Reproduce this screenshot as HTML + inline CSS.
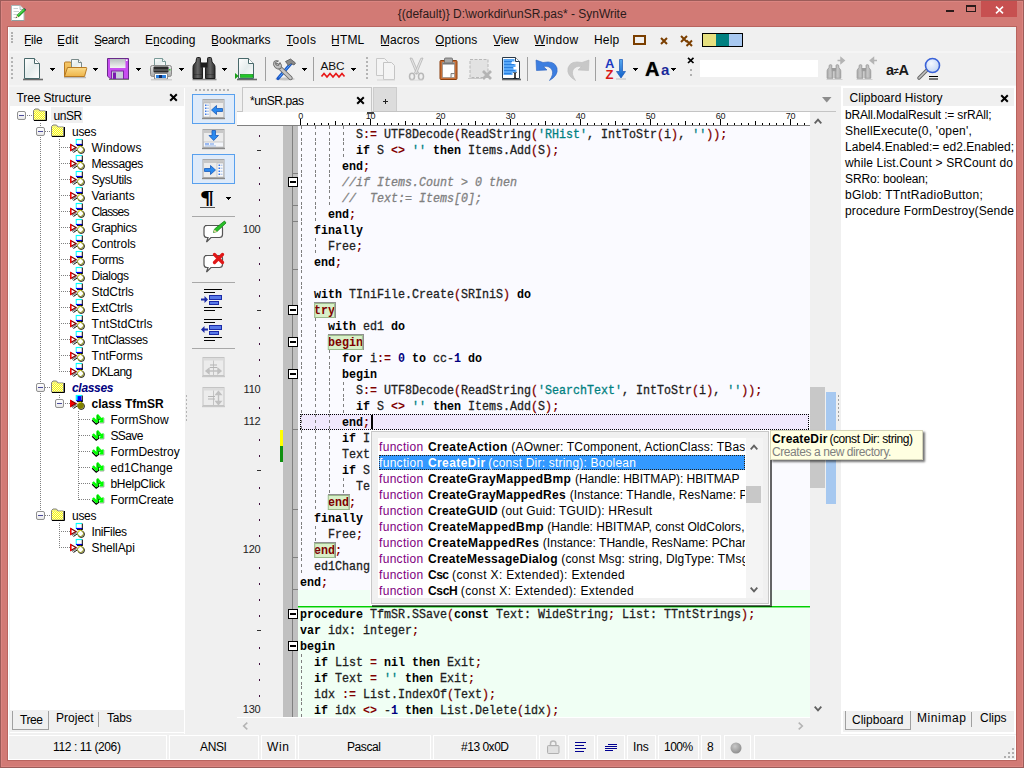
<!DOCTYPE html>
<html><head><meta charset="utf-8"><title>SynWrite</title>
<style>
html,body{margin:0;padding:0;}
body{width:1024px;height:768px;overflow:hidden;position:relative;background:#D27A75;font-family:"Liberation Sans",sans-serif;font-size:12px;}
.t{position:absolute;white-space:pre;line-height:16px;height:16px;}
.b{position:absolute;box-sizing:border-box;}
.m{font-family:"Liberation Mono",monospace;}
svg{position:absolute;overflow:visible;}
.code{position:absolute;white-space:pre;font-family:"Liberation Mono",monospace;font-size:13px;transform:scaleX(0.8974);transform-origin:0 0;line-height:16px;height:16px;color:#202020;-webkit-text-stroke:0.300px;}
.code b{color:#000;-webkit-text-stroke:0;}
.code .s{color:#800000;font-weight:bold;-webkit-text-stroke:0;}
.code .p{color:#800000;}
.code .q{color:#008080;}
.code .n{color:#000080;font-weight:bold;-webkit-text-stroke:0;}
.code .c{color:#808080;font-style:italic;}
.code .h{background:#D8F0C8;outline:1px solid #9AB88A;outline-offset:-1px;color:#800000;font-weight:bold;}
.code .h2{background:#D8F0C8;outline:1px solid #9AB88A;outline-offset:-1px;}

</style></head>
<body>
<div class="b " style="left:0px;top:0px;width:1024px;height:768px;background:#D27A75;border:1px solid #9C5C59;"></div>
<div class="b " style="left:1px;top:1px;width:1022px;height:766px;border:1px solid #DA8581;"></div>
<div class="b " style="left:7px;top:26px;width:1010px;height:735px;background:#B8645F;"></div>
<div class="b " style="left:8px;top:27px;width:1008px;height:733px;background:#F0F0F0;border-left:1px solid #fff;border-bottom:1px solid #fff;"></div>
<span class="t " style="left:397.8px;top:5.84px;font-size:12px;color:#2c1a1a;letter-spacing:-0.009px;">{(default)} D:\workdir\unSR.pas* - SynWrite</span>
<svg style="left:11px;top:5px" width="16" height="16" viewBox="0 0 16 16"><path d="M0.500 0.500h8.500l4 4v11h-12.500z" fill="#ffffff" stroke="#a8b8b8" stroke-width="1"/><path d="M1 15.500h12" stroke="#8a9898" stroke-width="0.800"/><path d="M9 0.500v4h4" fill="#f0f4f4" stroke="#a8b8b8" stroke-width="0.800"/><path d="M2.500 3.500h4.500M2.500 6.500h5.500M2.500 9.500h3.500M2.500 12.500h2" stroke="#c8d0d0" stroke-width="1"/><path d="M6.600 11.200l7.200-7" stroke="#187018" stroke-width="2.900"/><path d="M13.200 3.600l1.400 1.400" stroke="#203060" stroke-width="1.200"/><path d="M6.600 11.200l7-6.800" stroke="#28c828" stroke-width="1.700"/><path d="M7.200 10l5.800-5.600" stroke="#b0f0b0" stroke-width="0.500"/><path d="M4.600 13.100l1-2.900 2 2z" fill="#e8d8a8"/><path d="M4.500 13.200l0.600-1.500 1 1z" fill="#383838"/></svg>
<div class="b " style="left:946px;top:10px;width:8px;height:2px;background:#2a1a1a;"></div>
<div class="b " style="left:966px;top:5px;width:10px;height:7px;border:1px solid #2a1a1a;border-top:2px solid #2a1a1a;"></div>
<div class="b " style="left:981px;top:1px;width:36px;height:16px;background:#C75050;"></div>
<svg style="left:994.500px;top:5.500px" width="9" height="8" viewBox="0 0 9 8"><path d="M1 0.700l7 6.600M8 0.700l-7 6.600" stroke="#fff" stroke-width="1.600"/></svg>
<div class="b " style="left:9px;top:51px;width:1007px;height:2px;background:#F5F5F5;"></div>
<div class="b " style="left:9px;top:85px;width:1007px;height:2px;background:#F5F5F5;"></div>
<div class="b " style="left:11px;top:32px;width:2px;height:2px;background:#B0B0B0;"></div>
<div class="b " style="left:11px;top:35px;width:2px;height:2px;background:#B0B0B0;"></div>
<div class="b " style="left:11px;top:38px;width:2px;height:2px;background:#B0B0B0;"></div>
<div class="b " style="left:11px;top:41px;width:2px;height:2px;background:#B0B0B0;"></div>
<span class="t " style="left:24px;top:31.84px;font-size:12px;color:#000;letter-spacing:-0.209px;">File</span>
<div class="b " style="left:24.5px;top:45px;width:6px;height:1px;background:#000;"></div>
<span class="t " style="left:57px;top:31.84px;font-size:12px;color:#000;letter-spacing:0.206px;">Edit</span>
<div class="b " style="left:57.5px;top:45px;width:6px;height:1px;background:#000;"></div>
<span class="t " style="left:94px;top:31.84px;font-size:12px;color:#000;letter-spacing:-0.420px;">Search</span>
<div class="b " style="left:94.5px;top:45px;width:6px;height:1px;background:#000;"></div>
<span class="t " style="left:145px;top:31.84px;font-size:12px;color:#000;letter-spacing:0.058px;">Encoding</span>
<div class="b " style="left:153.504px;top:45px;width:5px;height:1px;background:#000;"></div>
<span class="t " style="left:211px;top:31.84px;font-size:12px;color:#000;letter-spacing:-0.057px;">Bookmarks</span>
<div class="b " style="left:211.5px;top:45px;width:6px;height:1px;background:#000;"></div>
<span class="t " style="left:286px;top:31.84px;font-size:12px;color:#000;letter-spacing:0.498px;">Tools</span>
<div class="b " style="left:286.5px;top:45px;width:6px;height:1px;background:#000;"></div>
<span class="t " style="left:331px;top:31.84px;font-size:12px;color:#000;letter-spacing:0.209px;">HTML</span>
<div class="b " style="left:331.5px;top:45px;width:7px;height:1px;background:#000;"></div>
<span class="t " style="left:380px;top:31.84px;font-size:12px;color:#000;letter-spacing:0.027px;">Macros</span>
<div class="b " style="left:380.5px;top:45px;width:8px;height:1px;background:#000;"></div>
<span class="t " style="left:435px;top:31.84px;font-size:12px;color:#000;letter-spacing:0.164px;">Options</span>
<div class="b " style="left:435.5px;top:45px;width:8px;height:1px;background:#000;"></div>
<span class="t " style="left:493px;top:31.84px;font-size:12px;color:#000;letter-spacing:-0.073px;">View</span>
<div class="b " style="left:493.5px;top:45px;width:6px;height:1px;background:#000;"></div>
<span class="t " style="left:534px;top:31.84px;font-size:12px;color:#000;letter-spacing:0.304px;">Window</span>
<div class="b " style="left:534.5px;top:45px;width:10px;height:1px;background:#000;"></div>
<span class="t " style="left:594px;top:31.84px;font-size:12px;color:#000;letter-spacing:0.205px;">Help</span>
<div class="b " style="left:633px;top:35px;width:13px;height:10px;border:2px solid #7B3F00;"></div>
<svg style="left:660px;top:37px" width="8" height="8" viewBox="0 0 8 8"><path d="M1 1l6 6M7 1l-6 6" stroke="#7B3F00" stroke-width="2"/></svg>
<svg style="left:680px;top:35px" width="13" height="12" viewBox="0 0 13 12"><path d="M1 1l6 6M7 1l-6 6" stroke="#7B3F00" stroke-width="2"/><path d="M6.5 5.5l5.5 5.5M12 5.5l-5.5 5.5" stroke="#7B3F00" stroke-width="2"/></svg>
<div class="b " style="left:702px;top:33px;width:41px;height:14px;background:#000;"></div>
<div class="b " style="left:703px;top:34px;width:13px;height:12px;background:#E6E080;"></div>
<div class="b " style="left:716px;top:34px;width:13px;height:12px;background:#008080;"></div>
<div class="b " style="left:729px;top:34px;width:13px;height:12px;background:#A8C8F0;"></div>
<svg width="0" height="0" style="left:0;top:0"><defs>
<linearGradient id="gdoc" x1="0" y1="0" x2="1" y2="1"><stop offset="0" stop-color="#ffffff"/><stop offset="0.5" stop-color="#e4ecec"/><stop offset="1" stop-color="#ffffff"/></linearGradient>
<linearGradient id="gfold" x1="0" y1="0" x2="0" y2="1"><stop offset="0" stop-color="#fbdc8c"/><stop offset="1" stop-color="#eeb448"/></linearGradient>
<linearGradient id="gfold2" x1="0" y1="0" x2="0" y2="1"><stop offset="0" stop-color="#f6c86a"/><stop offset="1" stop-color="#e8a93c"/></linearGradient>
<linearGradient id="gbino" x1="0" y1="0" x2="1" y2="0"><stop offset="0" stop-color="#2a2a2a"/><stop offset="0.5" stop-color="#666"/><stop offset="1" stop-color="#2a2a2a"/></linearGradient>
<linearGradient id="gbinog" x1="0" y1="0" x2="1" y2="0"><stop offset="0" stop-color="#a4a4a4"/><stop offset="0.5" stop-color="#c8c8c8"/><stop offset="1" stop-color="#a4a4a4"/></linearGradient>
<linearGradient id="gprn" x1="0" y1="0" x2="0" y2="1"><stop offset="0" stop-color="#e8e8e8"/><stop offset="1" stop-color="#a8a8a8"/></linearGradient>
<linearGradient id="gflop" x1="0" y1="0" x2="0" y2="1"><stop offset="0" stop-color="#b8c0c0"/><stop offset="1" stop-color="#f4f4f4"/></linearGradient>
<linearGradient id="gblue" x1="0" y1="0" x2="0" y2="1"><stop offset="0" stop-color="#58a8f0"/><stop offset="1" stop-color="#1060c8"/></linearGradient>
<radialGradient id="glens" cx="0.4" cy="0.35" r="0.7"><stop offset="0" stop-color="#f4f8ff"/><stop offset="1" stop-color="#c0d4f4"/></radialGradient>
</defs></svg>
<div class="b " style="left:11px;top:57px;width:2px;height:2px;background:#B4B4B4;"></div>
<div class="b " style="left:11px;top:61px;width:2px;height:2px;background:#B4B4B4;"></div>
<div class="b " style="left:11px;top:65px;width:2px;height:2px;background:#B4B4B4;"></div>
<div class="b " style="left:11px;top:69px;width:2px;height:2px;background:#B4B4B4;"></div>
<div class="b " style="left:11px;top:73px;width:2px;height:2px;background:#B4B4B4;"></div>
<div class="b " style="left:11px;top:77px;width:2px;height:2px;background:#B4B4B4;"></div>
<svg style="left:22px;top:57px" width="22" height="24" viewBox="0 0 22 24"><path d="M1 22.5h20" stroke="#6a6a6a" stroke-width="1.6"/><path d="M2.5 1.5h10l5 5v15h-15z" fill="url(#gdoc)" stroke="#48686a" stroke-width="1"/><path d="M12.5 1.5v5h5" fill="#fff" stroke="#48686a" stroke-width="1"/></svg>
<div class="b " style="left:50px;top:68px;width:5px;height:1px;background:#000;"></div>
<div class="b " style="left:51px;top:69px;width:3px;height:1px;background:#000;"></div>
<div class="b " style="left:52px;top:70px;width:1px;height:1px;background:#000;"></div>
<svg style="left:63px;top:58px" width="25" height="21" viewBox="0 0 25 21"><path d="M1 19.5h22" stroke="#b9b9b9" stroke-width="1.5"/><path d="M1.5 18.5v-13.5q0-1 1-1h5l1.5 2h4v12.5z" fill="url(#gfold2)" stroke="#b77a24" stroke-width="1"/><path d="M8.500 1.500h7l3 3v6h-10z" fill="url(#gdoc)" stroke="#7a8a8a" stroke-width="1"/><path d="M15.5 1.5v3h3" fill="#fff" stroke="#7a8a8a"/><path d="M4.5 9.500h18.500q1 0 0.700 1l-2.200 8h-20z" fill="url(#gfold)" stroke="#b77a24" stroke-width="1"/></svg>
<div class="b " style="left:93px;top:68px;width:5px;height:1px;background:#000;"></div>
<div class="b " style="left:94px;top:69px;width:3px;height:1px;background:#000;"></div>
<div class="b " style="left:95px;top:70px;width:1px;height:1px;background:#000;"></div>
<svg style="left:107px;top:58px" width="22" height="22" viewBox="0 0 22 22"><path d="M0.5 0.500h21v20.5h-18l-3-3z" fill="#c84ef0" stroke="#6a2a8a" stroke-width="1"/><rect x="3" y="1" width="15.500" height="9" fill="url(#gflop)"/><rect x="19" y="1.500" width="1.500" height="1.500" fill="#fff"/><rect x="4.500" y="13" width="12" height="8" fill="#c8ccd8" stroke="#7a2aa0" stroke-width="1"/><rect x="6" y="14.500" width="3" height="6.500" fill="#7a18b0"/><path d="M2 21.500h20" stroke="#7a7a7a" stroke-width="1"/></svg>
<div class="b " style="left:136px;top:68px;width:5px;height:1px;background:#000;"></div>
<div class="b " style="left:137px;top:69px;width:3px;height:1px;background:#000;"></div>
<div class="b " style="left:138px;top:70px;width:1px;height:1px;background:#000;"></div>
<svg style="left:149px;top:57px" width="25" height="24" viewBox="0 0 25 24"><path d="M5.500 9v-7.500h8l3 3v4.500z" fill="url(#gdoc)" stroke="#7a9a98"/><path d="M13.500 1.500v3h3" fill="#fff" stroke="#7a9a98"/><rect x="1.500" y="8.500" width="21" height="11" rx="2" fill="url(#gprn)" stroke="#8a8a8a"/><rect x="4.500" y="9.500" width="15" height="6" rx="1" fill="#2a2a2a"/><rect x="5" y="12" width="14" height="2" fill="#555"/><rect x="20" y="12" width="1.500" height="1.500" fill="#30d030"/><path d="M5.500 16.500h13v5.500h-13z" fill="#fff" stroke="#8a8a8a"/><path d="M7 18h10v3h-10z" fill="#2a80e0"/><path d="M10 18h3v3h-3z" fill="#102a60"/><path d="M2 22.800h21" stroke="#c8c8c8" stroke-width="1.200"/></svg>
<div class="b " style="left:179px;top:68px;width:5px;height:1px;background:#000;"></div>
<div class="b " style="left:180px;top:69px;width:3px;height:1px;background:#000;"></div>
<div class="b " style="left:181px;top:70px;width:1px;height:1px;background:#000;"></div>
<svg style="left:192px;top:57px" width="25" height="24" viewBox="0 0 25 24"><path d="M0.500 22.500h24" stroke="#8a8a8a" stroke-width="1.600"/><path d="M4.500 1.500q0-1 1-1h2q1 0 1 1v3.500l1.500 3q0.500 1 0.500 2.500v11h-9.500v-11q0-1.500 0.500-2.500l2.500-3z" fill="url(#gbino)" stroke="#1c1c1c" stroke-width="1"/><path d="M19.500 1.500q0-1 -1-1h-2q-1 0 -1 1v3.500l-1.500 3q-0.500 1 -0.500 2.500v11h9.500v-11q0-1.500 -0.500-2.500l-2.500-3z" fill="url(#gbino)" stroke="#1c1c1c" stroke-width="1"/><rect x="8.500" y="5.500" width="7" height="5" fill="#1c1c1c"/><path d="M2 17.500h8M14.500 17.500h8" stroke="#1c1c1c" stroke-width="0.600" opacity="0.600"/></svg>
<div class="b " style="left:222px;top:68px;width:5px;height:1px;background:#000;"></div>
<div class="b " style="left:223px;top:69px;width:3px;height:1px;background:#000;"></div>
<div class="b " style="left:224px;top:70px;width:1px;height:1px;background:#000;"></div>
<svg style="left:236px;top:57px" width="22" height="24" viewBox="0 0 22 24"><path d="M1 22.5h20" stroke="#6a6a6a" stroke-width="1.6"/><path d="M2.5 1.5h10l5 5v15h-15z" fill="url(#gdoc)" stroke="#48686a" stroke-width="1"/><path d="M12.5 1.5v5h5" fill="#fff" stroke="#48686a" stroke-width="1"/></svg>
<svg style="left:234px;top:72px" width="22" height="8" viewBox="0 0 22 8"><path d="M1 1l3.800 3-3.800 3z" fill="#18a018"/><rect x="6.500" y="2.500" width="12.500" height="2.800" fill="#20c828" stroke="#109018" stroke-width="0.700"/></svg>
<div class="b " style="left:265px;top:57px;width:1px;height:24px;background:#A0A0A0;"></div>
<svg style="left:272px;top:58px" width="25" height="23" viewBox="0 0 25 23"><ellipse cx="13" cy="21" rx="10" ry="1.500" fill="#c4c4c4"/><path d="M6 20.500l13-15" stroke="#1a58c8" stroke-width="3.200" stroke-linecap="round"/><path d="M7 19.500l12-14" stroke="#5aa8f8" stroke-width="1"/><path d="M13.500 3.500l5-2.500 5 4-1.500 2-3-1.500-2.500 2z" fill="#8a8a8a" stroke="#555" stroke-width="0.800"/><path d="M5 7l13.500 13" stroke="#666" stroke-width="4.400" stroke-linecap="round"/><path d="M5 7l13.500 13" stroke="#c4c4c4" stroke-width="2.600" stroke-linecap="round"/><path d="M2 3.500q-1.500 3.500 1 6t6 1q1.500-3.500-1-6l-1.500 3-2.500-0.500-0.500-2.500 3-1.500q-2.500-1-4.500 0.500z" fill="#c0c0c0" stroke="#666" stroke-width="0.900"/></svg>
<div class="b " style="left:302px;top:68px;width:5px;height:1px;background:#000;"></div>
<div class="b " style="left:303px;top:69px;width:3px;height:1px;background:#000;"></div>
<div class="b " style="left:304px;top:70px;width:1px;height:1px;background:#000;"></div>
<div class="b " style="left:313px;top:57px;width:1px;height:24px;background:#A0A0A0;"></div>
<span class="t" style="left:320.500px;top:58.400px;font-size:11.800px;color:#101010;letter-spacing:-0.1px">ABC</span>
<svg style="left:321px;top:72px" width="25" height="7" viewBox="0 0 25 7"><path d="M0.500 4.500l2.500-3 3 3.500 3-3.500 3 3.500 3-3.500 3 3.500 3-3.500 2.500 3" fill="none" stroke="#e81818" stroke-width="1.700"/></svg>
<div class="b " style="left:351px;top:68px;width:5px;height:1px;background:#000;"></div>
<div class="b " style="left:352px;top:69px;width:3px;height:1px;background:#000;"></div>
<div class="b " style="left:353px;top:70px;width:1px;height:1px;background:#000;"></div>
<div class="b " style="left:366px;top:57px;width:2px;height:2px;background:#B4B4B4;"></div>
<div class="b " style="left:366px;top:61px;width:2px;height:2px;background:#B4B4B4;"></div>
<div class="b " style="left:366px;top:65px;width:2px;height:2px;background:#B4B4B4;"></div>
<div class="b " style="left:366px;top:69px;width:2px;height:2px;background:#B4B4B4;"></div>
<div class="b " style="left:366px;top:73px;width:2px;height:2px;background:#B4B4B4;"></div>
<div class="b " style="left:366px;top:77px;width:2px;height:2px;background:#B4B4B4;"></div>
<svg style="left:375px;top:57px" width="22" height="24" viewBox="0 0 22 24"><path d="M1.500 1.500h8l3 3v14h-11z" fill="#f4f4f4" stroke="#c8c8c8"/><path d="M8.500 5.500h8l3 3v14h-11z" fill="#f4f4f4" stroke="#c4c4c4"/><path d="M2 23h18" stroke="#d4d4d4"/></svg>
<svg style="left:408px;top:57px" width="17" height="24" viewBox="0 0 17 24"><path d="M2 1l2.200 0.300 6.300 14.700-1.800 1.200z" fill="#e4e4e4" stroke="#b4b4b4" stroke-width="0.800"/><path d="M15 1l-2.200 0.300-6.300 14.700 1.800 1.200z" fill="#e4e4e4" stroke="#b4b4b4" stroke-width="0.800"/><ellipse cx="4" cy="19.500" rx="2.500" ry="3.200" fill="none" stroke="#b8b8b8" stroke-width="1.500"/><ellipse cx="13" cy="19.500" rx="2.500" ry="3.200" fill="none" stroke="#b8b8b8" stroke-width="1.500"/><path d="M2 23.200h13" stroke="#dcdcdc"/></svg>
<svg style="left:439px;top:57px" width="19" height="24" viewBox="0 0 19 24"><rect x="1" y="3.500" width="17" height="19" rx="1" fill="#c87038" stroke="#8a4010"/><rect x="3.500" y="5.500" width="12" height="15" fill="#fff" stroke="#888" stroke-width="0.600"/><rect x="5.500" y="1" width="8" height="5" rx="1" fill="#a8a8a8" stroke="#666" stroke-width="0.800"/><rect x="3.500" y="6" width="12" height="1.500" fill="#777"/><path d="M12 20.500v-4h3.500" fill="#e8e8e8" stroke="#666" stroke-width="0.800"/></svg>
<svg style="left:468px;top:58px" width="25" height="22" viewBox="0 0 25 22"><rect x="2" y="1.500" width="18" height="18" fill="#e2e2e2" stroke="#b8b8b8" stroke-dasharray="3 1.500"/><path d="M15 13l8 8M23 13l-8 8" stroke="#b4b4b4" stroke-width="2.800"/><path d="M0 20.500h14" stroke="#c8c8c8"/></svg>
<svg style="left:501px;top:57px" width="21" height="24" viewBox="0 0 21 24"><path d="M1 22.500h19" stroke="#6a6a6a" stroke-width="1.600"/><path d="M1.500 0.500h13l4 4v17h-17z" fill="#fff" stroke="#2a3a4a"/><path d="M14.500 0.500v4h4" fill="#fff" stroke="#2a3a4a"/><path d="M2.500 2h11v2.500h-3v2.500h4v3h-2v2.500h3v3h-4v2.500h-9z" fill="#58a8f8"/><path d="M3 4.500h8M3 7.500h10M3 10.500h9M3 13.500h11M3 16.500h7" stroke="#2a80e0" stroke-width="1"/><path d="M12.500 15.500q1.500 0 1.500 1.500v3q0 1.500 1.500 1.500M15.500 15.500q-1.500 0-1.500 1.500v3q0 1.500-1.500 1.500" stroke="#000" stroke-width="0.900" fill="none"/></svg>
<div class="b " style="left:527px;top:57px;width:1px;height:24px;background:#A0A0A0;"></div>
<svg style="left:535px;top:58px" width="24" height="23" viewBox="0 0 24 23"><path d="M1 2l0.500 10.500 10.500-0.500-3.500-3.500q6-1 8.500 3.500 2 4-2.500 10.500 9-5 7.500-12.500-2.500-8-14-5.500z" fill="#3c7ee0" stroke="#2a62c0" stroke-width="0.600"/></svg>
<svg style="left:566px;top:58px" width="24" height="23" viewBox="0 0 24 23"><path d="M23 2l-0.500 10.500-10.500-0.500 3.500-3.500q-6-1-8.500 3.500-2 4 2.500 10.500-9-5-7.500-12.500 2.500-8 14-5.500z" fill="#c8c8c8" stroke="#bcbcbc" stroke-width="0.600"/></svg>
<div class="b " style="left:595px;top:57px;width:1px;height:24px;background:#A0A0A0;"></div>
<span class="t" style="left:605px;top:55.500px;font-size:13px;font-weight:bold;color:#1c38c0">A</span>
<span class="t" style="left:605.500px;top:67px;font-size:13px;font-weight:bold;color:#d81818">Z</span>
<svg style="left:616px;top:59px" width="10" height="21" viewBox="0 0 10 21"><path d="M3.500 0.500h3v12h3l-4.500 6.500-4.500-6.500h3z" fill="url(#gblue)" stroke="#1858b8" stroke-width="0.700"/><path d="M0 20h10" stroke="#c0c0c0"/></svg>
<div class="b " style="left:633px;top:68px;width:5px;height:1px;background:#000;"></div>
<div class="b " style="left:634px;top:69px;width:3px;height:1px;background:#000;"></div>
<div class="b " style="left:635px;top:70px;width:1px;height:1px;background:#000;"></div>
<span class="t" style="left:645px;top:57px;font-size:20px;font-weight:bold;color:#000;line-height:24px;height:24px;text-shadow:0 0 1px #444">A</span>
<span class="t" style="left:661px;top:60px;font-size:15px;color:#1a2a9a;line-height:20px;height:20px;font-weight:bold">a</span>
<div class="b " style="left:671px;top:68px;width:5px;height:1px;background:#000;"></div>
<div class="b " style="left:672px;top:69px;width:3px;height:1px;background:#000;"></div>
<div class="b " style="left:673px;top:70px;width:1px;height:1px;background:#000;"></div>
<svg style="left:687px;top:57px" width="8" height="7" viewBox="0 0 8 7"><path d="M1 0.800l5.500 5.200M6.500 0.800l-5.500 5.200" stroke="#000" stroke-width="1.700"/></svg>
<div class="b " style="left:690px;top:69px;width:2px;height:2px;background:#B0B0B0;"></div>
<div class="b " style="left:690px;top:74px;width:2px;height:2px;background:#B0B0B0;"></div>
<div class="b " style="left:700px;top:60px;width:118px;height:17px;background:#fff;"></div>
<svg style="left:826px;top:57px" width="22" height="24" viewBox="0 0 22 24"><path d="M11.500 3.500h5.500M15 0.800l3.200 2.700-3.200 2.700z" fill="#b4b4b4" stroke="#b4b4b4" stroke-width="1.500"/><g transform="translate(0.500,7.500) scale(0.620,0.640)"><path d="M4.500 1.500q0-1 1-1h2q1 0 1 1v3.500l1.500 3q0.500 1 0.500 2.500v11h-9.500v-11q0-1.500 0.500-2.500l2.500-3z" fill="url(#gbinog)" stroke="#9c9c9c" stroke-width="1.400"/><path d="M19.500 1.500q0-1 -1-1h-2q-1 0 -1 1v3.500l-1.500 3q-0.500 1 -0.500 2.500v11h9.500v-11q0-1.500 -0.500-2.500l-2.500-3z" fill="url(#gbinog)" stroke="#9c9c9c" stroke-width="1.400"/><rect x="8.500" y="5.500" width="7" height="5" fill="#9c9c9c"/></g><path d="M0.500 22.500h16" stroke="#d0d0d0"/></svg>
<svg style="left:856px;top:57px" width="22" height="24" viewBox="0 0 22 24"><path d="M21 3.500h-5.500M17.500 0.800l-3.200 2.700 3.200 2.700z" fill="#b4b4b4" stroke="#b4b4b4" stroke-width="1.500"/><g transform="translate(0.500,7.500) scale(0.620,0.640)"><path d="M4.500 1.500q0-1 1-1h2q1 0 1 1v3.500l1.500 3q0.500 1 0.500 2.500v11h-9.500v-11q0-1.500 0.500-2.500l2.500-3z" fill="url(#gbinog)" stroke="#9c9c9c" stroke-width="1.400"/><path d="M19.500 1.500q0-1 -1-1h-2q-1 0 -1 1v3.500l-1.500 3q-0.500 1 -0.500 2.500v11h9.500v-11q0-1.500 -0.500-2.500l-2.500-3z" fill="url(#gbinog)" stroke="#9c9c9c" stroke-width="1.400"/><rect x="8.500" y="5.500" width="7" height="5" fill="#9c9c9c"/></g><path d="M0.500 22.500h16" stroke="#d0d0d0"/></svg>
<span class="t" style="left:886px;top:59.500px;font-size:14.500px;font-weight:bold;color:#1a1a1a;line-height:20px;height:20px;letter-spacing:-0.3px">a<span style="font-size:9px;vertical-align:1px">≠</span>A</span>
<svg style="left:917px;top:57px" width="25" height="24" viewBox="0 0 25 24"><path d="M2 21l7.500-7.500" stroke="#666" stroke-width="3.600" stroke-linecap="round"/><path d="M2 21l7.500-7.500" stroke="#c4c4c4" stroke-width="1.600" stroke-linecap="round"/><circle cx="15.500" cy="8.500" r="7" fill="url(#glens)" stroke="#3a62d8" stroke-width="1.600"/><path d="M12 19.500h9M12 22h9" stroke="#000" stroke-width="1"/></svg>
<div class="b " style="left:10px;top:88px;width:174px;height:18px;background:#F0F0F0;"></div>
<div class="b " style="left:10px;top:106px;width:174px;height:604px;background:#fff;"></div>
<span class="t " style="left:16.5px;top:89.84px;font-size:12px;color:#000;letter-spacing:-0.125px;">Tree Structure</span>
<svg style="left:169px;top:93px" width="9" height="9" viewBox="0 0 9 9"><path d="M1.200 1.200l6.600 6.600M7.800 1.200l-6.600 6.600" stroke="#000" stroke-width="2"/></svg>
<div class="b " style="left:27px;top:115px;width:6px;height:1px;background:repeating-linear-gradient(to right,#808080 0,#808080 1px,transparent 1px,transparent 2px);"></div>
<div class="b " style="left:17px;top:111px;width:9px;height:9px;border:1px solid #919191;border-radius:2px;background:linear-gradient(#fff,#e8e8e8);"></div>
<div class="b " style="left:19px;top:115px;width:5px;height:1px;background:#4B4B9B;"></div>
<svg style="left:31.5px;top:108px" width="15" height="13" viewBox="0 0 15 13"><defs><pattern id="dith" width="2" height="2" patternUnits="userSpaceOnUse"><rect width="2" height="2" fill="#FFFF00"/><rect width="1" height="1" fill="#F4F4D0"/><rect x="1" y="1" width="1" height="1" fill="#F4F4D0"/></pattern></defs><path d="M1.500 12v-9.500l1.500-1.500h3.500l1.500 2h5.500v9z" fill="#F4F478" stroke="#808080" stroke-width="1"/><rect x="2" y="3.500" width="11" height="8" fill="url(#dith)"/><path d="M2 12.500h12.500v-9.500" fill="none" stroke="#000" stroke-width="1"/></svg>
<div class="b " style="left:51px;top:107px;width:32px;height:16px;background:#F0F0F0;"></div>
<span class="t " style="left:53.5px;top:107.54px;font-size:12px;color:#000;letter-spacing:-0.454px;">unSR</span>
<div class="b " style="left:45px;top:131px;width:6px;height:1px;background:repeating-linear-gradient(to right,#808080 0,#808080 1px,transparent 1px,transparent 2px);"></div>
<div class="b " style="left:36px;top:127px;width:9px;height:9px;border:1px solid #919191;border-radius:2px;background:linear-gradient(#fff,#e8e8e8);"></div>
<div class="b " style="left:38px;top:131px;width:5px;height:1px;background:#4B4B9B;"></div>
<svg style="left:49.5px;top:124px" width="15" height="13" viewBox="0 0 15 13"><defs><pattern id="dith" width="2" height="2" patternUnits="userSpaceOnUse"><rect width="2" height="2" fill="#FFFF00"/><rect width="1" height="1" fill="#F4F4D0"/><rect x="1" y="1" width="1" height="1" fill="#F4F4D0"/></pattern></defs><path d="M1.500 12v-9.500l1.500-1.500h3.500l1.500 2h5.500v9z" fill="#F4F478" stroke="#808080" stroke-width="1"/><rect x="2" y="3.500" width="11" height="8" fill="url(#dith)"/><path d="M2 12.500h12.500v-9.500" fill="none" stroke="#000" stroke-width="1"/></svg>
<span class="t " style="left:72px;top:123.54px;font-size:12px;color:#000;letter-spacing:-0.287px;">uses</span>
<div class="b " style="left:59px;top:147px;width:11px;height:1px;background:repeating-linear-gradient(to right,#808080 0,#808080 1px,transparent 1px,transparent 2px);"></div>
<svg style="left:70px;top:139px" width="16" height="16" viewBox="0 0 16 16"><path d="M2 12.300l4.500-3" stroke="#808080" stroke-width="1.400"/><path d="M3.500 13.500l3.500-2.500" stroke="#000" stroke-width="1"/><path d="M0.700 5.500v6l5.300-3z" fill="#fff" stroke="#800000" stroke-width="1.200"/><path d="M0.700 5v7" stroke="#FF0000" stroke-width="1.400"/><rect x="6.500" y="0.500" width="5" height="5" fill="#fff" stroke="none"/><path d="M6 0.500h6" stroke="#00FFFF" stroke-width="1.200"/><path d="M6.200 0v5.500" stroke="#00FFFF" stroke-width="1"/><path d="M6 5.500h6.500" stroke="#0000FF" stroke-width="1.200"/><path d="M12.300 0.500v6M7 6.600h5.800" stroke="#000" stroke-width="1"/><circle cx="11.300" cy="11.300" r="3.100" fill="none" stroke="#000" stroke-width="1"/><circle cx="10.500" cy="10.500" r="3" fill="#fff" stroke="#808000" stroke-width="1"/><path d="M8.300 8.700q1-1.500 2.500-1.500" stroke="#FFFF00" stroke-width="1" fill="none"/></svg>
<span class="t " style="left:91.5px;top:139.54px;font-size:12px;color:#000;letter-spacing:0.217px;">Windows</span>
<div class="b " style="left:59px;top:163px;width:11px;height:1px;background:repeating-linear-gradient(to right,#808080 0,#808080 1px,transparent 1px,transparent 2px);"></div>
<svg style="left:70px;top:155px" width="16" height="16" viewBox="0 0 16 16"><path d="M2 12.300l4.500-3" stroke="#808080" stroke-width="1.400"/><path d="M3.500 13.500l3.500-2.500" stroke="#000" stroke-width="1"/><path d="M0.700 5.500v6l5.300-3z" fill="#fff" stroke="#800000" stroke-width="1.200"/><path d="M0.700 5v7" stroke="#FF0000" stroke-width="1.400"/><rect x="6.500" y="0.500" width="5" height="5" fill="#fff" stroke="none"/><path d="M6 0.500h6" stroke="#00FFFF" stroke-width="1.200"/><path d="M6.200 0v5.500" stroke="#00FFFF" stroke-width="1"/><path d="M6 5.500h6.500" stroke="#0000FF" stroke-width="1.200"/><path d="M12.300 0.500v6M7 6.600h5.800" stroke="#000" stroke-width="1"/><circle cx="11.300" cy="11.300" r="3.100" fill="none" stroke="#000" stroke-width="1"/><circle cx="10.500" cy="10.500" r="3" fill="#fff" stroke="#808000" stroke-width="1"/><path d="M8.300 8.700q1-1.500 2.500-1.500" stroke="#FFFF00" stroke-width="1" fill="none"/></svg>
<span class="t " style="left:91.5px;top:155.54px;font-size:12px;color:#000;letter-spacing:-0.436px;">Messages</span>
<div class="b " style="left:59px;top:179px;width:11px;height:1px;background:repeating-linear-gradient(to right,#808080 0,#808080 1px,transparent 1px,transparent 2px);"></div>
<svg style="left:70px;top:171px" width="16" height="16" viewBox="0 0 16 16"><path d="M2 12.300l4.500-3" stroke="#808080" stroke-width="1.400"/><path d="M3.500 13.500l3.500-2.500" stroke="#000" stroke-width="1"/><path d="M0.700 5.500v6l5.300-3z" fill="#fff" stroke="#800000" stroke-width="1.200"/><path d="M0.700 5v7" stroke="#FF0000" stroke-width="1.400"/><rect x="6.500" y="0.500" width="5" height="5" fill="#fff" stroke="none"/><path d="M6 0.500h6" stroke="#00FFFF" stroke-width="1.200"/><path d="M6.200 0v5.500" stroke="#00FFFF" stroke-width="1"/><path d="M6 5.500h6.500" stroke="#0000FF" stroke-width="1.200"/><path d="M12.300 0.500v6M7 6.600h5.800" stroke="#000" stroke-width="1"/><circle cx="11.300" cy="11.300" r="3.100" fill="none" stroke="#000" stroke-width="1"/><circle cx="10.500" cy="10.500" r="3" fill="#fff" stroke="#808000" stroke-width="1"/><path d="M8.300 8.700q1-1.500 2.500-1.500" stroke="#FFFF00" stroke-width="1" fill="none"/></svg>
<span class="t " style="left:91.5px;top:171.54px;font-size:12px;color:#000;letter-spacing:-0.392px;">SysUtils</span>
<div class="b " style="left:59px;top:195px;width:11px;height:1px;background:repeating-linear-gradient(to right,#808080 0,#808080 1px,transparent 1px,transparent 2px);"></div>
<svg style="left:70px;top:187px" width="16" height="16" viewBox="0 0 16 16"><path d="M2 12.300l4.500-3" stroke="#808080" stroke-width="1.400"/><path d="M3.500 13.500l3.500-2.500" stroke="#000" stroke-width="1"/><path d="M0.700 5.500v6l5.300-3z" fill="#fff" stroke="#800000" stroke-width="1.200"/><path d="M0.700 5v7" stroke="#FF0000" stroke-width="1.400"/><rect x="6.500" y="0.500" width="5" height="5" fill="#fff" stroke="none"/><path d="M6 0.500h6" stroke="#00FFFF" stroke-width="1.200"/><path d="M6.200 0v5.500" stroke="#00FFFF" stroke-width="1"/><path d="M6 5.500h6.500" stroke="#0000FF" stroke-width="1.200"/><path d="M12.300 0.500v6M7 6.600h5.800" stroke="#000" stroke-width="1"/><circle cx="11.300" cy="11.300" r="3.100" fill="none" stroke="#000" stroke-width="1"/><circle cx="10.500" cy="10.500" r="3" fill="#fff" stroke="#808000" stroke-width="1"/><path d="M8.300 8.700q1-1.500 2.500-1.500" stroke="#FFFF00" stroke-width="1" fill="none"/></svg>
<span class="t " style="left:91.5px;top:187.54px;font-size:12px;color:#000;letter-spacing:0.009px;">Variants</span>
<div class="b " style="left:59px;top:211px;width:11px;height:1px;background:repeating-linear-gradient(to right,#808080 0,#808080 1px,transparent 1px,transparent 2px);"></div>
<svg style="left:70px;top:203px" width="16" height="16" viewBox="0 0 16 16"><path d="M2 12.300l4.500-3" stroke="#808080" stroke-width="1.400"/><path d="M3.500 13.500l3.500-2.500" stroke="#000" stroke-width="1"/><path d="M0.700 5.500v6l5.300-3z" fill="#fff" stroke="#800000" stroke-width="1.200"/><path d="M0.700 5v7" stroke="#FF0000" stroke-width="1.400"/><rect x="6.500" y="0.500" width="5" height="5" fill="#fff" stroke="none"/><path d="M6 0.500h6" stroke="#00FFFF" stroke-width="1.200"/><path d="M6.200 0v5.500" stroke="#00FFFF" stroke-width="1"/><path d="M6 5.500h6.500" stroke="#0000FF" stroke-width="1.200"/><path d="M12.300 0.500v6M7 6.600h5.800" stroke="#000" stroke-width="1"/><circle cx="11.300" cy="11.300" r="3.100" fill="none" stroke="#000" stroke-width="1"/><circle cx="10.500" cy="10.500" r="3" fill="#fff" stroke="#808000" stroke-width="1"/><path d="M8.300 8.700q1-1.500 2.500-1.500" stroke="#FFFF00" stroke-width="1" fill="none"/></svg>
<span class="t " style="left:91.5px;top:203.54px;font-size:12px;color:#000;letter-spacing:-0.783px;">Classes</span>
<div class="b " style="left:59px;top:227px;width:11px;height:1px;background:repeating-linear-gradient(to right,#808080 0,#808080 1px,transparent 1px,transparent 2px);"></div>
<svg style="left:70px;top:219px" width="16" height="16" viewBox="0 0 16 16"><path d="M2 12.300l4.500-3" stroke="#808080" stroke-width="1.400"/><path d="M3.500 13.500l3.500-2.500" stroke="#000" stroke-width="1"/><path d="M0.700 5.500v6l5.300-3z" fill="#fff" stroke="#800000" stroke-width="1.200"/><path d="M0.700 5v7" stroke="#FF0000" stroke-width="1.400"/><rect x="6.500" y="0.500" width="5" height="5" fill="#fff" stroke="none"/><path d="M6 0.500h6" stroke="#00FFFF" stroke-width="1.200"/><path d="M6.200 0v5.500" stroke="#00FFFF" stroke-width="1"/><path d="M6 5.500h6.500" stroke="#0000FF" stroke-width="1.200"/><path d="M12.300 0.500v6M7 6.600h5.800" stroke="#000" stroke-width="1"/><circle cx="11.300" cy="11.300" r="3.100" fill="none" stroke="#000" stroke-width="1"/><circle cx="10.500" cy="10.500" r="3" fill="#fff" stroke="#808000" stroke-width="1"/><path d="M8.300 8.700q1-1.500 2.500-1.500" stroke="#FFFF00" stroke-width="1" fill="none"/></svg>
<span class="t " style="left:91.5px;top:219.54px;font-size:12px;color:#000;letter-spacing:-0.352px;">Graphics</span>
<div class="b " style="left:59px;top:243px;width:11px;height:1px;background:repeating-linear-gradient(to right,#808080 0,#808080 1px,transparent 1px,transparent 2px);"></div>
<svg style="left:70px;top:235px" width="16" height="16" viewBox="0 0 16 16"><path d="M2 12.300l4.500-3" stroke="#808080" stroke-width="1.400"/><path d="M3.500 13.500l3.500-2.500" stroke="#000" stroke-width="1"/><path d="M0.700 5.500v6l5.300-3z" fill="#fff" stroke="#800000" stroke-width="1.200"/><path d="M0.700 5v7" stroke="#FF0000" stroke-width="1.400"/><rect x="6.500" y="0.500" width="5" height="5" fill="#fff" stroke="none"/><path d="M6 0.500h6" stroke="#00FFFF" stroke-width="1.200"/><path d="M6.200 0v5.500" stroke="#00FFFF" stroke-width="1"/><path d="M6 5.500h6.500" stroke="#0000FF" stroke-width="1.200"/><path d="M12.300 0.500v6M7 6.600h5.800" stroke="#000" stroke-width="1"/><circle cx="11.300" cy="11.300" r="3.100" fill="none" stroke="#000" stroke-width="1"/><circle cx="10.500" cy="10.500" r="3" fill="#fff" stroke="#808000" stroke-width="1"/><path d="M8.300 8.700q1-1.500 2.500-1.500" stroke="#FFFF00" stroke-width="1" fill="none"/></svg>
<span class="t " style="left:91.5px;top:235.54px;font-size:12px;color:#000;letter-spacing:-0.060px;">Controls</span>
<div class="b " style="left:59px;top:259px;width:11px;height:1px;background:repeating-linear-gradient(to right,#808080 0,#808080 1px,transparent 1px,transparent 2px);"></div>
<svg style="left:70px;top:251px" width="16" height="16" viewBox="0 0 16 16"><path d="M2 12.300l4.500-3" stroke="#808080" stroke-width="1.400"/><path d="M3.500 13.500l3.500-2.500" stroke="#000" stroke-width="1"/><path d="M0.700 5.500v6l5.300-3z" fill="#fff" stroke="#800000" stroke-width="1.200"/><path d="M0.700 5v7" stroke="#FF0000" stroke-width="1.400"/><rect x="6.500" y="0.500" width="5" height="5" fill="#fff" stroke="none"/><path d="M6 0.500h6" stroke="#00FFFF" stroke-width="1.200"/><path d="M6.200 0v5.500" stroke="#00FFFF" stroke-width="1"/><path d="M6 5.500h6.500" stroke="#0000FF" stroke-width="1.200"/><path d="M12.300 0.500v6M7 6.600h5.800" stroke="#000" stroke-width="1"/><circle cx="11.300" cy="11.300" r="3.100" fill="none" stroke="#000" stroke-width="1"/><circle cx="10.500" cy="10.500" r="3" fill="#fff" stroke="#808000" stroke-width="1"/><path d="M8.300 8.700q1-1.500 2.500-1.500" stroke="#FFFF00" stroke-width="1" fill="none"/></svg>
<span class="t " style="left:91.5px;top:251.54px;font-size:12px;color:#000;letter-spacing:-0.359px;">Forms</span>
<div class="b " style="left:59px;top:275px;width:11px;height:1px;background:repeating-linear-gradient(to right,#808080 0,#808080 1px,transparent 1px,transparent 2px);"></div>
<svg style="left:70px;top:267px" width="16" height="16" viewBox="0 0 16 16"><path d="M2 12.300l4.500-3" stroke="#808080" stroke-width="1.400"/><path d="M3.500 13.500l3.500-2.500" stroke="#000" stroke-width="1"/><path d="M0.700 5.500v6l5.300-3z" fill="#fff" stroke="#800000" stroke-width="1.200"/><path d="M0.700 5v7" stroke="#FF0000" stroke-width="1.400"/><rect x="6.500" y="0.500" width="5" height="5" fill="#fff" stroke="none"/><path d="M6 0.500h6" stroke="#00FFFF" stroke-width="1.200"/><path d="M6.200 0v5.500" stroke="#00FFFF" stroke-width="1"/><path d="M6 5.500h6.500" stroke="#0000FF" stroke-width="1.200"/><path d="M12.300 0.500v6M7 6.600h5.800" stroke="#000" stroke-width="1"/><circle cx="11.300" cy="11.300" r="3.100" fill="none" stroke="#000" stroke-width="1"/><circle cx="10.500" cy="10.500" r="3" fill="#fff" stroke="#808000" stroke-width="1"/><path d="M8.300 8.700q1-1.500 2.500-1.500" stroke="#FFFF00" stroke-width="1" fill="none"/></svg>
<span class="t " style="left:91.5px;top:267.54px;font-size:12px;color:#000;letter-spacing:-0.403px;">Dialogs</span>
<div class="b " style="left:59px;top:291px;width:11px;height:1px;background:repeating-linear-gradient(to right,#808080 0,#808080 1px,transparent 1px,transparent 2px);"></div>
<svg style="left:70px;top:283px" width="16" height="16" viewBox="0 0 16 16"><path d="M2 12.300l4.500-3" stroke="#808080" stroke-width="1.400"/><path d="M3.500 13.500l3.500-2.500" stroke="#000" stroke-width="1"/><path d="M0.700 5.500v6l5.300-3z" fill="#fff" stroke="#800000" stroke-width="1.200"/><path d="M0.700 5v7" stroke="#FF0000" stroke-width="1.400"/><rect x="6.500" y="0.500" width="5" height="5" fill="#fff" stroke="none"/><path d="M6 0.500h6" stroke="#00FFFF" stroke-width="1.200"/><path d="M6.200 0v5.500" stroke="#00FFFF" stroke-width="1"/><path d="M6 5.500h6.500" stroke="#0000FF" stroke-width="1.200"/><path d="M12.300 0.500v6M7 6.600h5.800" stroke="#000" stroke-width="1"/><circle cx="11.300" cy="11.300" r="3.100" fill="none" stroke="#000" stroke-width="1"/><circle cx="10.500" cy="10.500" r="3" fill="#fff" stroke="#808000" stroke-width="1"/><path d="M8.300 8.700q1-1.500 2.500-1.500" stroke="#FFFF00" stroke-width="1" fill="none"/></svg>
<span class="t " style="left:91.5px;top:283.54px;font-size:12px;color:#000;letter-spacing:-0.059px;">StdCtrls</span>
<div class="b " style="left:59px;top:307px;width:11px;height:1px;background:repeating-linear-gradient(to right,#808080 0,#808080 1px,transparent 1px,transparent 2px);"></div>
<svg style="left:70px;top:299px" width="16" height="16" viewBox="0 0 16 16"><path d="M2 12.300l4.500-3" stroke="#808080" stroke-width="1.400"/><path d="M3.500 13.500l3.500-2.500" stroke="#000" stroke-width="1"/><path d="M0.700 5.500v6l5.300-3z" fill="#fff" stroke="#800000" stroke-width="1.200"/><path d="M0.700 5v7" stroke="#FF0000" stroke-width="1.400"/><rect x="6.500" y="0.500" width="5" height="5" fill="#fff" stroke="none"/><path d="M6 0.500h6" stroke="#00FFFF" stroke-width="1.200"/><path d="M6.200 0v5.500" stroke="#00FFFF" stroke-width="1"/><path d="M6 5.500h6.500" stroke="#0000FF" stroke-width="1.200"/><path d="M12.300 0.500v6M7 6.600h5.800" stroke="#000" stroke-width="1"/><circle cx="11.300" cy="11.300" r="3.100" fill="none" stroke="#000" stroke-width="1"/><circle cx="10.500" cy="10.500" r="3" fill="#fff" stroke="#808000" stroke-width="1"/><path d="M8.300 8.700q1-1.500 2.500-1.500" stroke="#FFFF00" stroke-width="1" fill="none"/></svg>
<span class="t " style="left:91.5px;top:299.54px;font-size:12px;color:#000;letter-spacing:-0.100px;">ExtCtrls</span>
<div class="b " style="left:59px;top:323px;width:11px;height:1px;background:repeating-linear-gradient(to right,#808080 0,#808080 1px,transparent 1px,transparent 2px);"></div>
<svg style="left:70px;top:315px" width="16" height="16" viewBox="0 0 16 16"><path d="M2 12.300l4.500-3" stroke="#808080" stroke-width="1.400"/><path d="M3.500 13.500l3.500-2.500" stroke="#000" stroke-width="1"/><path d="M0.700 5.500v6l5.300-3z" fill="#fff" stroke="#800000" stroke-width="1.200"/><path d="M0.700 5v7" stroke="#FF0000" stroke-width="1.400"/><rect x="6.500" y="0.500" width="5" height="5" fill="#fff" stroke="none"/><path d="M6 0.500h6" stroke="#00FFFF" stroke-width="1.200"/><path d="M6.200 0v5.500" stroke="#00FFFF" stroke-width="1"/><path d="M6 5.500h6.500" stroke="#0000FF" stroke-width="1.200"/><path d="M12.300 0.500v6M7 6.600h5.800" stroke="#000" stroke-width="1"/><circle cx="11.300" cy="11.300" r="3.100" fill="none" stroke="#000" stroke-width="1"/><circle cx="10.500" cy="10.500" r="3" fill="#fff" stroke="#808000" stroke-width="1"/><path d="M8.300 8.700q1-1.500 2.500-1.500" stroke="#FFFF00" stroke-width="1" fill="none"/></svg>
<span class="t " style="left:91.5px;top:315.54px;font-size:12px;color:#000;letter-spacing:0.108px;">TntStdCtrls</span>
<div class="b " style="left:59px;top:339px;width:11px;height:1px;background:repeating-linear-gradient(to right,#808080 0,#808080 1px,transparent 1px,transparent 2px);"></div>
<svg style="left:70px;top:331px" width="16" height="16" viewBox="0 0 16 16"><path d="M2 12.300l4.500-3" stroke="#808080" stroke-width="1.400"/><path d="M3.500 13.500l3.500-2.500" stroke="#000" stroke-width="1"/><path d="M0.700 5.500v6l5.300-3z" fill="#fff" stroke="#800000" stroke-width="1.200"/><path d="M0.700 5v7" stroke="#FF0000" stroke-width="1.400"/><rect x="6.500" y="0.500" width="5" height="5" fill="#fff" stroke="none"/><path d="M6 0.500h6" stroke="#00FFFF" stroke-width="1.200"/><path d="M6.200 0v5.500" stroke="#00FFFF" stroke-width="1"/><path d="M6 5.500h6.500" stroke="#0000FF" stroke-width="1.200"/><path d="M12.300 0.500v6M7 6.600h5.800" stroke="#000" stroke-width="1"/><circle cx="11.300" cy="11.300" r="3.100" fill="none" stroke="#000" stroke-width="1"/><circle cx="10.500" cy="10.500" r="3" fill="#fff" stroke="#808000" stroke-width="1"/><path d="M8.300 8.700q1-1.500 2.500-1.500" stroke="#FFFF00" stroke-width="1" fill="none"/></svg>
<span class="t " style="left:91.5px;top:331.54px;font-size:12px;color:#000;letter-spacing:-0.381px;">TntClasses</span>
<div class="b " style="left:59px;top:355px;width:11px;height:1px;background:repeating-linear-gradient(to right,#808080 0,#808080 1px,transparent 1px,transparent 2px);"></div>
<svg style="left:70px;top:347px" width="16" height="16" viewBox="0 0 16 16"><path d="M2 12.300l4.500-3" stroke="#808080" stroke-width="1.400"/><path d="M3.500 13.500l3.500-2.500" stroke="#000" stroke-width="1"/><path d="M0.700 5.500v6l5.300-3z" fill="#fff" stroke="#800000" stroke-width="1.200"/><path d="M0.700 5v7" stroke="#FF0000" stroke-width="1.400"/><rect x="6.500" y="0.500" width="5" height="5" fill="#fff" stroke="none"/><path d="M6 0.500h6" stroke="#00FFFF" stroke-width="1.200"/><path d="M6.200 0v5.500" stroke="#00FFFF" stroke-width="1"/><path d="M6 5.500h6.500" stroke="#0000FF" stroke-width="1.200"/><path d="M12.300 0.500v6M7 6.600h5.800" stroke="#000" stroke-width="1"/><circle cx="11.300" cy="11.300" r="3.100" fill="none" stroke="#000" stroke-width="1"/><circle cx="10.500" cy="10.500" r="3" fill="#fff" stroke="#808000" stroke-width="1"/><path d="M8.300 8.700q1-1.500 2.500-1.500" stroke="#FFFF00" stroke-width="1" fill="none"/></svg>
<span class="t " style="left:91.5px;top:347.54px;font-size:12px;color:#000;letter-spacing:-0.016px;">TntForms</span>
<div class="b " style="left:59px;top:371px;width:11px;height:1px;background:repeating-linear-gradient(to right,#808080 0,#808080 1px,transparent 1px,transparent 2px);"></div>
<svg style="left:70px;top:363px" width="16" height="16" viewBox="0 0 16 16"><path d="M2 12.300l4.500-3" stroke="#808080" stroke-width="1.400"/><path d="M3.500 13.500l3.500-2.500" stroke="#000" stroke-width="1"/><path d="M0.700 5.500v6l5.300-3z" fill="#fff" stroke="#800000" stroke-width="1.200"/><path d="M0.700 5v7" stroke="#FF0000" stroke-width="1.400"/><rect x="6.500" y="0.500" width="5" height="5" fill="#fff" stroke="none"/><path d="M6 0.500h6" stroke="#00FFFF" stroke-width="1.200"/><path d="M6.200 0v5.500" stroke="#00FFFF" stroke-width="1"/><path d="M6 5.500h6.500" stroke="#0000FF" stroke-width="1.200"/><path d="M12.300 0.500v6M7 6.600h5.800" stroke="#000" stroke-width="1"/><circle cx="11.300" cy="11.300" r="3.100" fill="none" stroke="#000" stroke-width="1"/><circle cx="10.500" cy="10.500" r="3" fill="#fff" stroke="#808000" stroke-width="1"/><path d="M8.300 8.700q1-1.500 2.500-1.500" stroke="#FFFF00" stroke-width="1" fill="none"/></svg>
<span class="t " style="left:91.5px;top:363.54px;font-size:12px;color:#000;letter-spacing:-0.527px;">DKLang</span>
<div class="b " style="left:45px;top:387px;width:6px;height:1px;background:repeating-linear-gradient(to right,#808080 0,#808080 1px,transparent 1px,transparent 2px);"></div>
<div class="b " style="left:36px;top:383px;width:9px;height:9px;border:1px solid #919191;border-radius:2px;background:linear-gradient(#fff,#e8e8e8);"></div>
<div class="b " style="left:38px;top:387px;width:5px;height:1px;background:#4B4B9B;"></div>
<svg style="left:49.5px;top:380px" width="15" height="13" viewBox="0 0 15 13"><defs><pattern id="dith" width="2" height="2" patternUnits="userSpaceOnUse"><rect width="2" height="2" fill="#FFFF00"/><rect width="1" height="1" fill="#F4F4D0"/><rect x="1" y="1" width="1" height="1" fill="#F4F4D0"/></pattern></defs><path d="M1.500 12v-9.500l1.500-1.500h3.500l1.500 2h5.500v9z" fill="#F4F478" stroke="#808080" stroke-width="1"/><rect x="2" y="3.500" width="11" height="8" fill="url(#dith)"/><path d="M2 12.500h12.500v-9.500" fill="none" stroke="#000" stroke-width="1"/></svg>
<span class="t " style="left:72px;top:379.54px;font-size:12px;color:#000080;letter-spacing:-0.310px;font-weight:bold;font-style:italic;">classes</span>
<div class="b " style="left:65px;top:403px;width:5px;height:1px;background:repeating-linear-gradient(to right,#808080 0,#808080 1px,transparent 1px,transparent 2px);"></div>
<div class="b " style="left:55px;top:399px;width:9px;height:9px;border:1px solid #919191;border-radius:2px;background:linear-gradient(#fff,#e8e8e8);"></div>
<div class="b " style="left:57px;top:403px;width:5px;height:1px;background:#4B4B9B;"></div>
<svg style="left:70px;top:395px" width="16" height="16" viewBox="0 0 16 16"><path d="M2 12.300l4.500-3" stroke="#808080" stroke-width="1.400"/><path d="M3.500 13.500l3.500-2.500" stroke="#000" stroke-width="1"/><path d="M0.700 5.500v6l5.300-3z" fill="#FF0000" stroke="#800000" stroke-width="1.200"/><path d="M0.700 5v7" stroke="#FF0000" stroke-width="1.400"/><rect x="6.500" y="0.500" width="5" height="5" fill="#0000FF" stroke="none"/><path d="M6 0.500h6" stroke="#00FFFF" stroke-width="1.200"/><path d="M6.200 0v5.500" stroke="#00FFFF" stroke-width="1"/><path d="M6 5.500h6.500" stroke="#0000FF" stroke-width="1.200"/><path d="M12.300 0.500v6M7 6.600h5.800" stroke="#000" stroke-width="1"/><path d="M6.200 1l1.500 1-1.500 1 1.500 1-1.500 1" stroke="#00FFFF" stroke-width="1" fill="none"/><circle cx="11.300" cy="11.300" r="3.100" fill="none" stroke="#000" stroke-width="1"/><circle cx="10.500" cy="10.500" r="3" fill="#808000" stroke="#808000" stroke-width="1"/><path d="M8.300 8.700q1-1.500 2.500-1.500" stroke="#FFFF00" stroke-width="1" fill="none"/></svg>
<span class="t " style="left:91.5px;top:395.54px;font-size:12px;color:#000;letter-spacing:0.016px;font-weight:bold;">class TfmSR</span>
<div class="b " style="left:79px;top:419px;width:12px;height:1px;background:repeating-linear-gradient(to right,#808080 0,#808080 1px,transparent 1px,transparent 2px);"></div>
<svg style="left:91px;top:410.5px" width="16" height="16" viewBox="0 0 16 16"><path d="M1.200 9.200l4 4 2.300-1.700 0-3.300 1.800 0" fill="none" stroke="#000" stroke-width="1.300"/><path d="M12.900 7v5h-4" fill="none" stroke="#909090" stroke-width="0.800"/><path d="M0.800 8l2-1.800 2.700 2.800v-5l1.500-1 3.500 4 2-1v5.500h-4.500l1.500-2-2-2v3l-2 2z" fill="#00FF00"/><path d="M5.700 4.500v4.500l1.500-1.200v-3.500z" fill="#00C000"/></svg>
<span class="t " style="left:110.5px;top:411.54px;font-size:12px;color:#000;letter-spacing:0.024px;">FormShow</span>
<div class="b " style="left:79px;top:435px;width:12px;height:1px;background:repeating-linear-gradient(to right,#808080 0,#808080 1px,transparent 1px,transparent 2px);"></div>
<svg style="left:91px;top:426.5px" width="16" height="16" viewBox="0 0 16 16"><path d="M1.200 9.200l4 4 2.300-1.700 0-3.300 1.800 0" fill="none" stroke="#000" stroke-width="1.300"/><path d="M12.900 7v5h-4" fill="none" stroke="#909090" stroke-width="0.800"/><path d="M0.800 8l2-1.800 2.700 2.800v-5l1.500-1 3.500 4 2-1v5.500h-4.500l1.500-2-2-2v3l-2 2z" fill="#00FF00"/><path d="M5.700 4.500v4.500l1.500-1.200v-3.500z" fill="#00C000"/></svg>
<span class="t " style="left:110.5px;top:427.54px;font-size:12px;color:#000;letter-spacing:-0.631px;">SSave</span>
<div class="b " style="left:79px;top:451px;width:12px;height:1px;background:repeating-linear-gradient(to right,#808080 0,#808080 1px,transparent 1px,transparent 2px);"></div>
<svg style="left:91px;top:442.5px" width="16" height="16" viewBox="0 0 16 16"><path d="M1.200 9.200l4 4 2.300-1.700 0-3.300 1.800 0" fill="none" stroke="#000" stroke-width="1.300"/><path d="M12.900 7v5h-4" fill="none" stroke="#909090" stroke-width="0.800"/><path d="M0.800 8l2-1.800 2.700 2.800v-5l1.500-1 3.500 4 2-1v5.500h-4.500l1.500-2-2-2v3l-2 2z" fill="#00FF00"/><path d="M5.700 4.500v4.500l1.500-1.200v-3.500z" fill="#00C000"/></svg>
<span class="t " style="left:110.5px;top:443.54px;font-size:12px;color:#000;letter-spacing:-0.012px;">FormDestroy</span>
<div class="b " style="left:79px;top:467px;width:12px;height:1px;background:repeating-linear-gradient(to right,#808080 0,#808080 1px,transparent 1px,transparent 2px);"></div>
<svg style="left:91px;top:458.5px" width="16" height="16" viewBox="0 0 16 16"><path d="M1.200 9.200l4 4 2.300-1.700 0-3.300 1.800 0" fill="none" stroke="#000" stroke-width="1.300"/><path d="M12.900 7v5h-4" fill="none" stroke="#909090" stroke-width="0.800"/><path d="M0.800 8l2-1.800 2.700 2.800v-5l1.500-1 3.500 4 2-1v5.500h-4.500l1.500-2-2-2v3l-2 2z" fill="#00FF00"/><path d="M5.700 4.500v4.500l1.500-1.200v-3.500z" fill="#00C000"/></svg>
<span class="t " style="left:110.5px;top:459.54px;font-size:12px;color:#000;letter-spacing:0.017px;">ed1Change</span>
<div class="b " style="left:79px;top:483px;width:12px;height:1px;background:repeating-linear-gradient(to right,#808080 0,#808080 1px,transparent 1px,transparent 2px);"></div>
<svg style="left:91px;top:474.5px" width="16" height="16" viewBox="0 0 16 16"><path d="M1.200 9.200l4 4 2.300-1.700 0-3.300 1.800 0" fill="none" stroke="#000" stroke-width="1.300"/><path d="M12.900 7v5h-4" fill="none" stroke="#909090" stroke-width="0.800"/><path d="M0.800 8l2-1.800 2.700 2.800v-5l1.500-1 3.500 4 2-1v5.500h-4.500l1.500-2-2-2v3l-2 2z" fill="#00FF00"/><path d="M5.700 4.500v4.500l1.500-1.200v-3.500z" fill="#00C000"/></svg>
<span class="t " style="left:110.5px;top:475.54px;font-size:12px;color:#000;letter-spacing:-0.315px;">bHelpClick</span>
<div class="b " style="left:79px;top:499px;width:12px;height:1px;background:repeating-linear-gradient(to right,#808080 0,#808080 1px,transparent 1px,transparent 2px);"></div>
<svg style="left:91px;top:490.5px" width="16" height="16" viewBox="0 0 16 16"><path d="M1.200 9.200l4 4 2.300-1.700 0-3.300 1.800 0" fill="none" stroke="#000" stroke-width="1.300"/><path d="M12.900 7v5h-4" fill="none" stroke="#909090" stroke-width="0.800"/><path d="M0.800 8l2-1.800 2.700 2.800v-5l1.500-1 3.500 4 2-1v5.500h-4.500l1.500-2-2-2v3l-2 2z" fill="#00FF00"/><path d="M5.700 4.500v4.500l1.500-1.200v-3.500z" fill="#00C000"/></svg>
<span class="t " style="left:110.5px;top:491.54px;font-size:12px;color:#000;letter-spacing:-0.081px;">FormCreate</span>
<div class="b " style="left:45px;top:515px;width:6px;height:1px;background:repeating-linear-gradient(to right,#808080 0,#808080 1px,transparent 1px,transparent 2px);"></div>
<div class="b " style="left:36px;top:511px;width:9px;height:9px;border:1px solid #919191;border-radius:2px;background:linear-gradient(#fff,#e8e8e8);"></div>
<div class="b " style="left:38px;top:515px;width:5px;height:1px;background:#4B4B9B;"></div>
<svg style="left:49.5px;top:508px" width="15" height="13" viewBox="0 0 15 13"><defs><pattern id="dith" width="2" height="2" patternUnits="userSpaceOnUse"><rect width="2" height="2" fill="#FFFF00"/><rect width="1" height="1" fill="#F4F4D0"/><rect x="1" y="1" width="1" height="1" fill="#F4F4D0"/></pattern></defs><path d="M1.500 12v-9.500l1.500-1.500h3.500l1.500 2h5.500v9z" fill="#F4F478" stroke="#808080" stroke-width="1"/><rect x="2" y="3.500" width="11" height="8" fill="url(#dith)"/><path d="M2 12.500h12.500v-9.500" fill="none" stroke="#000" stroke-width="1"/></svg>
<span class="t " style="left:72px;top:507.54px;font-size:12px;color:#000;letter-spacing:-0.287px;">uses</span>
<div class="b " style="left:59px;top:531px;width:11px;height:1px;background:repeating-linear-gradient(to right,#808080 0,#808080 1px,transparent 1px,transparent 2px);"></div>
<svg style="left:70px;top:523px" width="16" height="16" viewBox="0 0 16 16"><path d="M2 12.300l4.500-3" stroke="#808080" stroke-width="1.400"/><path d="M3.500 13.500l3.500-2.500" stroke="#000" stroke-width="1"/><path d="M0.700 5.500v6l5.300-3z" fill="#fff" stroke="#800000" stroke-width="1.200"/><path d="M0.700 5v7" stroke="#FF0000" stroke-width="1.400"/><rect x="6.500" y="0.500" width="5" height="5" fill="#fff" stroke="none"/><path d="M6 0.500h6" stroke="#00FFFF" stroke-width="1.200"/><path d="M6.200 0v5.500" stroke="#00FFFF" stroke-width="1"/><path d="M6 5.500h6.500" stroke="#0000FF" stroke-width="1.200"/><path d="M12.300 0.500v6M7 6.600h5.800" stroke="#000" stroke-width="1"/><circle cx="11.300" cy="11.300" r="3.100" fill="none" stroke="#000" stroke-width="1"/><circle cx="10.500" cy="10.500" r="3" fill="#fff" stroke="#808000" stroke-width="1"/><path d="M8.300 8.700q1-1.500 2.500-1.500" stroke="#FFFF00" stroke-width="1" fill="none"/></svg>
<span class="t " style="left:91.5px;top:523.54px;font-size:12px;color:#000;letter-spacing:-0.351px;">IniFiles</span>
<div class="b " style="left:59px;top:547px;width:11px;height:1px;background:repeating-linear-gradient(to right,#808080 0,#808080 1px,transparent 1px,transparent 2px);"></div>
<svg style="left:70px;top:539px" width="16" height="16" viewBox="0 0 16 16"><path d="M2 12.300l4.500-3" stroke="#808080" stroke-width="1.400"/><path d="M3.500 13.500l3.500-2.500" stroke="#000" stroke-width="1"/><path d="M0.700 5.500v6l5.300-3z" fill="#fff" stroke="#800000" stroke-width="1.200"/><path d="M0.700 5v7" stroke="#FF0000" stroke-width="1.400"/><rect x="6.500" y="0.500" width="5" height="5" fill="#fff" stroke="none"/><path d="M6 0.500h6" stroke="#00FFFF" stroke-width="1.200"/><path d="M6.200 0v5.500" stroke="#00FFFF" stroke-width="1"/><path d="M6 5.500h6.500" stroke="#0000FF" stroke-width="1.200"/><path d="M12.300 0.500v6M7 6.600h5.800" stroke="#000" stroke-width="1"/><circle cx="11.300" cy="11.300" r="3.100" fill="none" stroke="#000" stroke-width="1"/><circle cx="10.500" cy="10.500" r="3" fill="#fff" stroke="#808000" stroke-width="1"/><path d="M8.300 8.700q1-1.500 2.500-1.500" stroke="#FFFF00" stroke-width="1" fill="none"/></svg>
<span class="t " style="left:91.5px;top:539.54px;font-size:12px;color:#000;letter-spacing:-0.103px;">ShellApi</span>
<div class="b " style="left:40px;top:123px;width:1px;height:4px;background:repeating-linear-gradient(to bottom,#808080 0,#808080 1px,transparent 1px,transparent 2px);"></div>
<div class="b " style="left:40px;top:137px;width:1px;height:246px;background:repeating-linear-gradient(to bottom,#808080 0,#808080 1px,transparent 1px,transparent 2px);"></div>
<div class="b " style="left:40px;top:393px;width:1px;height:118px;background:repeating-linear-gradient(to bottom,#808080 0,#808080 1px,transparent 1px,transparent 2px);"></div>
<div class="b " style="left:59px;top:139px;width:1px;height:233px;background:repeating-linear-gradient(to bottom,#808080 0,#808080 1px,transparent 1px,transparent 2px);"></div>
<div class="b " style="left:78px;top:411px;width:1px;height:89px;background:repeating-linear-gradient(to bottom,#808080 0,#808080 1px,transparent 1px,transparent 2px);"></div>
<div class="b " style="left:59px;top:523px;width:1px;height:25px;background:repeating-linear-gradient(to bottom,#808080 0,#808080 1px,transparent 1px,transparent 2px);"></div>
<div class="b " style="left:59px;top:395px;width:1px;height:4px;background:repeating-linear-gradient(to bottom,#808080 0,#808080 1px,transparent 1px,transparent 2px);"></div>
<div class="b " style="left:10px;top:710px;width:174px;height:22px;background:#F0F0F0;"></div>
<div class="b " style="left:12px;top:711px;width:37px;height:19px;background:#F0F0F0;border:1px solid #A0A0A0;border-top:none;"></div>
<span class="t " style="left:20px;top:712.34px;font-size:12px;color:#000;letter-spacing:-0.432px;">Tree</span>
<span class="t " style="left:56px;top:710.34px;font-size:12px;color:#000;letter-spacing:0.022px;">Project</span>
<span class="t " style="left:107px;top:710.34px;font-size:12px;color:#000;letter-spacing:-0.212px;">Tabs</span>
<div class="b " style="left:98px;top:712px;width:1px;height:15px;background:#A0A0A0;"></div>
<div class="b " style="left:186px;top:88px;width:51px;height:644px;background:#F0F0F0;"></div>
<div class="b " style="left:195px;top:89px;width:2px;height:2px;background:#B4B4B4;"></div>
<div class="b " style="left:199px;top:89px;width:2px;height:2px;background:#B4B4B4;"></div>
<div class="b " style="left:203px;top:89px;width:2px;height:2px;background:#B4B4B4;"></div>
<div class="b " style="left:207px;top:89px;width:2px;height:2px;background:#B4B4B4;"></div>
<div class="b " style="left:211px;top:89px;width:2px;height:2px;background:#B4B4B4;"></div>
<div class="b " style="left:215px;top:89px;width:2px;height:2px;background:#B4B4B4;"></div>
<div class="b " style="left:219px;top:89px;width:2px;height:2px;background:#B4B4B4;"></div>
<div class="b " style="left:223px;top:89px;width:2px;height:2px;background:#B4B4B4;"></div>
<div class="b " style="left:227px;top:89px;width:2px;height:2px;background:#B4B4B4;"></div>
<div class="b " style="left:192px;top:94px;width:43px;height:30px;background:#DFEBFA;border:1px solid #58A0EE;"></div>
<svg style="left:202px;top:99px" width="23" height="20" viewBox="0 0 23 20"><path d="M0 19.500h23" stroke="#8a8a8a" stroke-width="1.400"/><rect x="1" y="0.500" width="21" height="18" fill="#ececec" stroke="#a8a8a8"/><rect x="1.500" y="1" width="20" height="3" fill="#c8c8c8"/><rect x="1.500" y="4" width="6.500" height="14" fill="#fafafa" stroke="#b0b0b0" stroke-width="0.600"/><rect x="3" y="5.5" width="1.500" height="1.500" fill="#3a78e8"/><rect x="5" y="5.7" width="2" height="1" fill="#9ab8e8"/><rect x="3" y="8.5" width="1.500" height="1.500" fill="#3a78e8"/><rect x="5" y="8.7" width="2" height="1" fill="#9ab8e8"/><rect x="3" y="11.5" width="1.500" height="1.500" fill="#3a78e8"/><rect x="5" y="11.7" width="2" height="1" fill="#9ab8e8"/><rect x="3" y="14.5" width="1.500" height="1.500" fill="#3a78e8"/><rect x="5" y="14.7" width="2" height="1" fill="#9ab8e8"/><path d="M20.500 9.500h-6v-3l-5 4.500 5 4.500v-3h6z" fill="#2a8af0" stroke="#1a5ab8" stroke-width="0.800"/></svg>
<svg style="left:202px;top:129px" width="23" height="20" viewBox="0 0 23 20"><path d="M0 19.500h23" stroke="#8a8a8a" stroke-width="1.400"/><rect x="1" y="0.500" width="21" height="18" fill="#ececec" stroke="#a8a8a8"/><rect x="1.500" y="1" width="20" height="3" fill="#c8c8c8"/><rect x="1.500" y="13" width="20" height="5" fill="#f4f6fa" stroke="#b0b0b0" stroke-width="0.600"/><rect x="3" y="14.500" width="4" height="1" fill="#3a78e8"/><rect x="8" y="14.500" width="4" height="1" fill="#6a98e8"/><rect x="3" y="16.500" width="11" height="0.800" fill="#9ab8e8"/><path d="M10 1.500h3.500v5h3l-4.800 5-4.700-5h3z" fill="#2a8af0" stroke="#1a5ab8" stroke-width="0.800"/></svg>
<div class="b " style="left:192px;top:154px;width:43px;height:30px;background:#DFEBFA;border:1px solid #58A0EE;"></div>
<svg style="left:202px;top:159px" width="23" height="20" viewBox="0 0 23 20"><path d="M0 19.500h23" stroke="#8a8a8a" stroke-width="1.400"/><rect x="1" y="0.500" width="21" height="18" fill="#ececec" stroke="#a8a8a8"/><rect x="1.500" y="1" width="20" height="3" fill="#c8c8c8"/><rect x="15" y="4" width="6.500" height="14" fill="#fafafa" stroke="#b0b0b0" stroke-width="0.600"/><rect x="16.500" y="5.5" width="1.500" height="1.500" fill="#3a78e8"/><rect x="18.500" y="5.7" width="2" height="1" fill="#9ab8e8"/><rect x="16.500" y="8.5" width="1.500" height="1.500" fill="#3a78e8"/><rect x="18.500" y="8.7" width="2" height="1" fill="#9ab8e8"/><rect x="16.500" y="11.5" width="1.500" height="1.500" fill="#3a78e8"/><rect x="18.500" y="11.7" width="2" height="1" fill="#9ab8e8"/><rect x="16.500" y="14.5" width="1.500" height="1.500" fill="#3a78e8"/><rect x="18.500" y="14.7" width="2" height="1" fill="#9ab8e8"/><path d="M2.500 9.500h6v-3l5 4.500-5 4.500v-3h-6z" fill="#2a8af0" stroke="#1a5ab8" stroke-width="0.800"/></svg>
<span class="t" style="left:199.500px;top:184px;transform:scaleX(1.350);transform-origin:0 0;font-family:'Liberation Serif',serif;font-size:19.500px;font-weight:bold;line-height:28px;height:28px;color:#000">¶</span>
<div class="b " style="left:200px;top:207px;width:15px;height:1px;background:#555;"></div>
<div class="b " style="left:226px;top:197px;width:5px;height:1px;background:#000;"></div>
<div class="b " style="left:227px;top:198px;width:3px;height:1px;background:#000;"></div>
<div class="b " style="left:228px;top:199px;width:1px;height:1px;background:#000;"></div>
<div class="b " style="left:192px;top:216px;width:43px;height:1px;background:#A8A8A8;"></div>
<svg style="left:201px;top:221px" width="24" height="24" viewBox="0 0 24 24"><path d="M4 4.500h14.500q3 0 3 3v6q0 3-3 3h-8.500l-4.500 4.500 1.500-4.500h-1q-3 0-3-3v-6q0-3 3-3z" fill="#fff" stroke="#555" stroke-width="1.200"/></svg>
<svg style="left:210px;top:220px" width="17" height="14" viewBox="0 0 17 14"><path d="M14.500 1l1.500 2-9 8.500-3.500 1 1-3.500z" fill="#28c028" stroke="#148014" stroke-width="0.800"/><path d="M3.500 12.500l1-3 2.500 2.200z" fill="#e8d8a0"/></svg>
<svg style="left:201px;top:251px" width="24" height="24" viewBox="0 0 24 24"><path d="M4 4.500h14.500q3 0 3 3v6q0 3-3 3h-8.500l-4.500 4.500 1.500-4.500h-1q-3 0-3-3v-6q0-3 3-3z" fill="#fff" stroke="#555" stroke-width="1.200"/></svg>
<svg style="left:212px;top:252px" width="13" height="13" viewBox="0 0 13 13"><path d="M2.500 2.500l8 8M10.500 2.500l-8 8" stroke="#e01818" stroke-width="3.200" stroke-linecap="round"/></svg>
<div class="b " style="left:192px;top:282px;width:43px;height:1px;background:#A8A8A8;"></div>
<div class="b " style="left:204px;top:289px;width:18px;height:1px;background:#000;"></div>
<div class="b " style="left:204px;top:292px;width:11px;height:1px;background:#000;"></div>
<div class="b " style="left:209px;top:295px;width:13px;height:5px;background:#5A7AE8;border:1px solid #1A2AA8;"></div>
<div class="b " style="left:209px;top:301px;width:10px;height:4px;background:#5A7AE8;border:1px solid #1A2AA8;"></div>
<div class="b " style="left:204px;top:307px;width:18px;height:1px;background:#000;"></div>
<div class="b " style="left:204px;top:310px;width:11px;height:1px;background:#000;"></div>
<svg style="left:201px;top:296px" width="7" height="7" viewBox="0 0 7 7"><path d="M0 2.500h3.500v-2.500l3.500 3.500-3.500 3.500v-2.500h-3.500z" fill="#1A2AA8"/></svg>
<div class="b " style="left:204px;top:319px;width:18px;height:1px;background:#000;"></div>
<div class="b " style="left:204px;top:322px;width:11px;height:1px;background:#000;"></div>
<div class="b " style="left:209px;top:325px;width:13px;height:5px;background:#5A7AE8;border:1px solid #1A2AA8;"></div>
<div class="b " style="left:209px;top:331px;width:10px;height:4px;background:#5A7AE8;border:1px solid #1A2AA8;"></div>
<div class="b " style="left:204px;top:337px;width:18px;height:1px;background:#000;"></div>
<div class="b " style="left:204px;top:340px;width:11px;height:1px;background:#000;"></div>
<svg style="left:201px;top:326px" width="7" height="7" viewBox="0 0 7 7"><path d="M7 2.500h-3.500v-2.500l-3.500 3.500 3.500 3.500v-2.500h3.500z" fill="#1A2AA8"/></svg>
<div class="b " style="left:192px;top:348px;width:43px;height:1px;background:#A8A8A8;"></div>
<svg style="left:202px;top:357px" width="23" height="20" viewBox="0 0 23 20"><path d="M0 19.500h23" stroke="#c8c8c8" stroke-width="1.400"/><rect x="1" y="0.500" width="21" height="18" fill="#ececec" stroke="#c4c4c4"/><rect x="1.500" y="1" width="20" height="2.500" fill="#dcdcdc"/><path d="M11.500 3.500v15" stroke="#c4c4c4"/><path d="M8 8h7M8 10.500h7" stroke="#b4b4b4"/><path d="M4 14h15M4 14l3-2.500v5zM19 14l-3-2.500v5z" stroke="#c0c0c0" fill="#c0c0c0" stroke-width="1.400"/></svg>
<svg style="left:202px;top:387px" width="23" height="20" viewBox="0 0 23 20"><path d="M0 19.500h23" stroke="#c8c8c8" stroke-width="1.400"/><rect x="1" y="0.500" width="21" height="18" fill="#ececec" stroke="#c4c4c4"/><rect x="1.500" y="1" width="20" height="2.500" fill="#dcdcdc"/><path d="M11.500 3.500v15" stroke="#c4c4c4"/><path d="M6 9.500h7M6 12h7" stroke="#b4b4b4"/><path d="M16.500 5.500v11M16.500 4.500l-2.500 3h5zM16.500 17.500l-2.500-3h5z" stroke="#c0c0c0" fill="#c0c0c0" stroke-width="1.400"/></svg>
<div class="b " style="left:186px;top:395px;width:1px;height:2px;background:#B4B4B4;"></div>
<div class="b " style="left:186px;top:399px;width:1px;height:2px;background:#B4B4B4;"></div>
<div class="b " style="left:186px;top:403px;width:1px;height:2px;background:#B4B4B4;"></div>
<div class="b " style="left:186px;top:407px;width:1px;height:2px;background:#B4B4B4;"></div>
<div class="b " style="left:186px;top:411px;width:1px;height:2px;background:#B4B4B4;"></div>
<div class="b " style="left:186px;top:415px;width:1px;height:2px;background:#B4B4B4;"></div>
<div class="b " style="left:186px;top:419px;width:1px;height:2px;background:#B4B4B4;"></div>
<div class="b " style="left:237px;top:88px;width:600px;height:23px;background:#F0F0F0;"></div>
<div class="b " style="left:237px;top:111px;width:599px;height:1px;background:#C4C4C4;"></div>
<div class="b " style="left:242px;top:87px;width:130px;height:25px;background:#F2F2F2;border:1px solid #C6C6C6;border-bottom:none;"></div>
<span class="t " style="left:250px;top:92.84px;font-size:12px;color:#000;letter-spacing:-0.430px;">*unSR.pas</span>
<svg style="left:356px;top:95.5px" width="9" height="9" viewBox="0 0 9 9"><path d="M1.200 1.200l6.600 6.600M7.800 1.200l-6.600 6.600" stroke="#000" stroke-width="2"/></svg>
<div class="b " style="left:373px;top:87px;width:24px;height:24px;background:#DCDCDC;border:1px solid #CCCCCC;border-bottom:none;"></div>
<div class="b " style="left:383px;top:101px;width:5px;height:1px;background:#222;"></div>
<div class="b " style="left:385px;top:99px;width:1px;height:5px;background:#222;"></div>
<svg style="left:822px;top:97px" width="10" height="6" viewBox="0 0 10 6"><path d="M0 0h9.500l-4.750 5.500z" fill="#8C8C8C"/></svg>
<div class="b " style="left:237px;top:112px;width:573px;height:13px;background:#fff;"></div>
<div class="b " style="left:237px;top:125px;width:573px;height:1px;background:#808080;"></div>
<div class="b " style="left:300px;top:119px;width:1px;height:6px;background:#000;"></div>
<div class="b " style="left:307px;top:123px;width:1px;height:2px;background:#000;"></div>
<div class="b " style="left:314px;top:123px;width:1px;height:2px;background:#000;"></div>
<div class="b " style="left:321px;top:123px;width:1px;height:2px;background:#000;"></div>
<div class="b " style="left:328px;top:123px;width:1px;height:2px;background:#000;"></div>
<div class="b " style="left:335px;top:121px;width:1px;height:4px;background:#000;"></div>
<div class="b " style="left:342px;top:123px;width:1px;height:2px;background:#000;"></div>
<div class="b " style="left:349px;top:123px;width:1px;height:2px;background:#000;"></div>
<div class="b " style="left:356px;top:123px;width:1px;height:2px;background:#000;"></div>
<div class="b " style="left:363px;top:123px;width:1px;height:2px;background:#000;"></div>
<div class="b " style="left:370px;top:119px;width:1px;height:6px;background:#000;"></div>
<div class="b " style="left:377px;top:123px;width:1px;height:2px;background:#000;"></div>
<div class="b " style="left:384px;top:123px;width:1px;height:2px;background:#000;"></div>
<div class="b " style="left:391px;top:123px;width:1px;height:2px;background:#000;"></div>
<div class="b " style="left:398px;top:123px;width:1px;height:2px;background:#000;"></div>
<div class="b " style="left:405px;top:121px;width:1px;height:4px;background:#000;"></div>
<div class="b " style="left:412px;top:123px;width:1px;height:2px;background:#000;"></div>
<div class="b " style="left:419px;top:123px;width:1px;height:2px;background:#000;"></div>
<div class="b " style="left:426px;top:123px;width:1px;height:2px;background:#000;"></div>
<div class="b " style="left:433px;top:123px;width:1px;height:2px;background:#000;"></div>
<div class="b " style="left:440px;top:119px;width:1px;height:6px;background:#000;"></div>
<div class="b " style="left:447px;top:123px;width:1px;height:2px;background:#000;"></div>
<div class="b " style="left:454px;top:123px;width:1px;height:2px;background:#000;"></div>
<div class="b " style="left:461px;top:123px;width:1px;height:2px;background:#000;"></div>
<div class="b " style="left:468px;top:123px;width:1px;height:2px;background:#000;"></div>
<div class="b " style="left:475px;top:121px;width:1px;height:4px;background:#000;"></div>
<div class="b " style="left:482px;top:123px;width:1px;height:2px;background:#000;"></div>
<div class="b " style="left:489px;top:123px;width:1px;height:2px;background:#000;"></div>
<div class="b " style="left:496px;top:123px;width:1px;height:2px;background:#000;"></div>
<div class="b " style="left:503px;top:123px;width:1px;height:2px;background:#000;"></div>
<div class="b " style="left:510px;top:119px;width:1px;height:6px;background:#000;"></div>
<div class="b " style="left:517px;top:123px;width:1px;height:2px;background:#000;"></div>
<div class="b " style="left:524px;top:123px;width:1px;height:2px;background:#000;"></div>
<div class="b " style="left:531px;top:123px;width:1px;height:2px;background:#000;"></div>
<div class="b " style="left:538px;top:123px;width:1px;height:2px;background:#000;"></div>
<div class="b " style="left:545px;top:121px;width:1px;height:4px;background:#000;"></div>
<div class="b " style="left:552px;top:123px;width:1px;height:2px;background:#000;"></div>
<div class="b " style="left:559px;top:123px;width:1px;height:2px;background:#000;"></div>
<div class="b " style="left:566px;top:123px;width:1px;height:2px;background:#000;"></div>
<div class="b " style="left:573px;top:123px;width:1px;height:2px;background:#000;"></div>
<div class="b " style="left:580px;top:119px;width:1px;height:6px;background:#000;"></div>
<div class="b " style="left:587px;top:123px;width:1px;height:2px;background:#000;"></div>
<div class="b " style="left:594px;top:123px;width:1px;height:2px;background:#000;"></div>
<div class="b " style="left:601px;top:123px;width:1px;height:2px;background:#000;"></div>
<div class="b " style="left:608px;top:123px;width:1px;height:2px;background:#000;"></div>
<div class="b " style="left:615px;top:121px;width:1px;height:4px;background:#000;"></div>
<div class="b " style="left:622px;top:123px;width:1px;height:2px;background:#000;"></div>
<div class="b " style="left:629px;top:123px;width:1px;height:2px;background:#000;"></div>
<div class="b " style="left:636px;top:123px;width:1px;height:2px;background:#000;"></div>
<div class="b " style="left:643px;top:123px;width:1px;height:2px;background:#000;"></div>
<div class="b " style="left:650px;top:119px;width:1px;height:6px;background:#000;"></div>
<div class="b " style="left:657px;top:123px;width:1px;height:2px;background:#000;"></div>
<div class="b " style="left:664px;top:123px;width:1px;height:2px;background:#000;"></div>
<div class="b " style="left:671px;top:123px;width:1px;height:2px;background:#000;"></div>
<div class="b " style="left:678px;top:123px;width:1px;height:2px;background:#000;"></div>
<div class="b " style="left:685px;top:121px;width:1px;height:4px;background:#000;"></div>
<div class="b " style="left:692px;top:123px;width:1px;height:2px;background:#000;"></div>
<div class="b " style="left:699px;top:123px;width:1px;height:2px;background:#000;"></div>
<div class="b " style="left:706px;top:123px;width:1px;height:2px;background:#000;"></div>
<div class="b " style="left:713px;top:123px;width:1px;height:2px;background:#000;"></div>
<div class="b " style="left:720px;top:119px;width:1px;height:6px;background:#000;"></div>
<div class="b " style="left:727px;top:123px;width:1px;height:2px;background:#000;"></div>
<div class="b " style="left:734px;top:123px;width:1px;height:2px;background:#000;"></div>
<div class="b " style="left:741px;top:123px;width:1px;height:2px;background:#000;"></div>
<div class="b " style="left:748px;top:123px;width:1px;height:2px;background:#000;"></div>
<div class="b " style="left:755px;top:121px;width:1px;height:4px;background:#000;"></div>
<div class="b " style="left:762px;top:123px;width:1px;height:2px;background:#000;"></div>
<div class="b " style="left:769px;top:123px;width:1px;height:2px;background:#000;"></div>
<div class="b " style="left:776px;top:123px;width:1px;height:2px;background:#000;"></div>
<div class="b " style="left:783px;top:123px;width:1px;height:2px;background:#000;"></div>
<div class="b " style="left:790px;top:119px;width:1px;height:6px;background:#000;"></div>
<div class="b " style="left:797px;top:123px;width:1px;height:2px;background:#000;"></div>
<div class="b " style="left:804px;top:123px;width:1px;height:2px;background:#000;"></div>
<span class="t" style="left:285.5px;top:108px;width:30px;text-align:center;font-size:9px;color:#222;letter-spacing:-0.300px">0</span>
<span class="t" style="left:355.5px;top:108px;width:30px;text-align:center;font-size:9px;color:#222;letter-spacing:-0.300px">10</span>
<span class="t" style="left:425.5px;top:108px;width:30px;text-align:center;font-size:9px;color:#222;letter-spacing:-0.300px">20</span>
<span class="t" style="left:495.5px;top:108px;width:30px;text-align:center;font-size:9px;color:#222;letter-spacing:-0.300px">30</span>
<span class="t" style="left:565.5px;top:108px;width:30px;text-align:center;font-size:9px;color:#222;letter-spacing:-0.300px">40</span>
<span class="t" style="left:635.5px;top:108px;width:30px;text-align:center;font-size:9px;color:#222;letter-spacing:-0.300px">50</span>
<span class="t" style="left:705.5px;top:108px;width:30px;text-align:center;font-size:9px;color:#222;letter-spacing:-0.300px">60</span>
<span class="t" style="left:775.5px;top:108px;width:30px;text-align:center;font-size:9px;color:#222;letter-spacing:-0.300px">70</span>
<div class="b " style="left:367px;top:112px;width:7px;height:2px;background:#404040;"></div>
<div class="b " style="left:237px;top:126px;width:46px;height:591px;background:#F0F0F0;"></div>
<div class="b " style="left:283px;top:126px;width:15px;height:591px;background:#C0C0C0;"></div>
<div class="b " style="left:292px;top:126px;width:1px;height:591px;background:#808080;"></div>
<div class="b " style="left:298px;top:126px;width:512px;height:464px;background:#FAFAFF;"></div>
<div class="b " style="left:298px;top:590px;width:512px;height:127px;background:#F0FFF4;"></div>
<div class="b " style="left:298px;top:606px;width:512px;height:1px;background:#00D000;"></div>
<div class="b " style="left:298px;top:607px;width:512px;height:1px;background:#80E880;"></div>
<div class="b " style="left:300px;top:414px;width:509px;height:16px;background:#F0E8FC;"></div>
<div class="b " style="left:300px;top:414px;width:509px;height:1px;background:repeating-linear-gradient(to right,#000 0,#000 1px,transparent 1px,transparent 2px);"></div>
<div class="b " style="left:300px;top:429px;width:509px;height:1px;background:repeating-linear-gradient(to right,#000 0,#000 1px,transparent 1px,transparent 2px);"></div>
<div class="b " style="left:300px;top:414px;width:1px;height:16px;background:repeating-linear-gradient(to bottom,#000 0,#000 1px,transparent 1px,transparent 2px);"></div>
<div class="b " style="left:808px;top:414px;width:1px;height:16px;background:repeating-linear-gradient(to bottom,#000 0,#000 1px,transparent 1px,transparent 2px);"></div>
<div class="b " style="left:280px;top:430px;width:3px;height:16px;background:#FFFF00;"></div>
<div class="b " style="left:280px;top:446px;width:3px;height:16px;background:#109010;"></div>
<div class="b " style="left:301px;top:126px;width:1px;height:448px;background:repeating-linear-gradient(to bottom,#808080 0,#808080 3px,transparent 3px,transparent 6px,#808080 6px,#808080 9px,transparent 9px,transparent 12px,#808080 12px,#808080 15px,transparent 15px,transparent 16px);"></div>
<div class="b " style="left:315px;top:126px;width:1px;height:96px;background:repeating-linear-gradient(to bottom,#808080 0,#808080 3px,transparent 3px,transparent 6px,#808080 6px,#808080 9px,transparent 9px,transparent 12px,#808080 12px,#808080 15px,transparent 15px,transparent 16px);"></div>
<div class="b " style="left:329px;top:126px;width:1px;height:80px;background:repeating-linear-gradient(to bottom,#808080 0,#808080 3px,transparent 3px,transparent 6px,#808080 6px,#808080 9px,transparent 9px,transparent 12px,#808080 12px,#808080 15px,transparent 15px,transparent 16px);"></div>
<div class="b " style="left:343px;top:126px;width:1px;height:32px;background:repeating-linear-gradient(to bottom,#808080 0,#808080 3px,transparent 3px,transparent 6px,#808080 6px,#808080 9px,transparent 9px,transparent 12px,#808080 12px,#808080 15px,transparent 15px,transparent 16px);"></div>
<div class="b " style="left:315px;top:238px;width:1px;height:16px;background:repeating-linear-gradient(to bottom,#808080 0,#808080 3px,transparent 3px,transparent 6px,#808080 6px,#808080 9px,transparent 9px,transparent 12px,#808080 12px,#808080 15px,transparent 15px,transparent 16px);"></div>
<div class="b " style="left:315px;top:318px;width:1px;height:192px;background:repeating-linear-gradient(to bottom,#808080 0,#808080 3px,transparent 3px,transparent 6px,#808080 6px,#808080 9px,transparent 9px,transparent 12px,#808080 12px,#808080 15px,transparent 15px,transparent 16px);"></div>
<div class="b " style="left:329px;top:350px;width:1px;height:144px;background:repeating-linear-gradient(to bottom,#808080 0,#808080 3px,transparent 3px,transparent 6px,#808080 6px,#808080 9px,transparent 9px,transparent 12px,#808080 12px,#808080 15px,transparent 15px,transparent 16px);"></div>
<div class="b " style="left:343px;top:382px;width:1px;height:32px;background:repeating-linear-gradient(to bottom,#808080 0,#808080 3px,transparent 3px,transparent 6px,#808080 6px,#808080 9px,transparent 9px,transparent 12px,#808080 12px,#808080 15px,transparent 15px,transparent 16px);"></div>
<div class="b " style="left:343px;top:478px;width:1px;height:16px;background:repeating-linear-gradient(to bottom,#808080 0,#808080 3px,transparent 3px,transparent 6px,#808080 6px,#808080 9px,transparent 9px,transparent 12px,#808080 12px,#808080 15px,transparent 15px,transparent 16px);"></div>
<div class="b " style="left:315px;top:526px;width:1px;height:16px;background:repeating-linear-gradient(to bottom,#808080 0,#808080 3px,transparent 3px,transparent 6px,#808080 6px,#808080 9px,transparent 9px,transparent 12px,#808080 12px,#808080 15px,transparent 15px,transparent 16px);"></div>
<div class="b " style="left:301px;top:654px;width:1px;height:64px;background:repeating-linear-gradient(to bottom,#808080 0,#808080 3px,transparent 3px,transparent 6px,#808080 6px,#808080 9px,transparent 9px,transparent 12px,#808080 12px,#808080 15px,transparent 15px,transparent 16px);"></div>
<div class="b " style="left:314px;top:302px;width:22px;height:16px;background:#D6F4C8;border:1px solid #909090;"></div>
<div class="b " style="left:328px;top:334px;width:36px;height:16px;background:#D6F4C8;border:1px solid #909090;"></div>
<div class="b " style="left:328px;top:494px;width:22px;height:16px;background:#D6F4C8;border:1px solid #909090;"></div>
<div class="b " style="left:314px;top:542px;width:22px;height:16px;background:#D6F4C8;border:1px solid #909090;"></div>
<div class="code" style="left:300px;top:127px">        S<span class="s">:=</span> UTF8Decode<span class="p">(</span>ReadString<span class="p">(</span><span class="q">&#x27;RHist&#x27;</span>, IntToStr<span class="p">(</span>i<span class="p">)</span>, <span class="q">&#x27;&#x27;</span><span class="p">)</span><span class="p">)</span><span class="s">;</span></div>
<div class="b " style="left:259px;top:135px;width:1px;height:2px;background:#401040;"></div>
<div class="code" style="left:300px;top:143px">        <b>if</b> S <span class="s">&lt;&gt;</span> <span class="q">&#x27;&#x27;</span> <b>then</b> Items.Add<span class="p">(</span>S<span class="p">)</span><span class="s">;</span></div>
<div class="b " style="left:257px;top:150px;width:4px;height:1px;background:#303030;"></div>
<div class="code" style="left:300px;top:159px">      <b>end</b><span class="s">;</span></div>
<div class="b " style="left:259px;top:167px;width:1px;height:2px;background:#401040;"></div>
<div class="code" style="left:300px;top:175px">      <span class="c">//if Items.Count &gt; 0 then</span></div>
<div class="b " style="left:259px;top:183px;width:1px;height:2px;background:#401040;"></div>
<div class="code" style="left:300px;top:191px">      <span class="c">//  Text:= Items[0];</span></div>
<div class="b " style="left:259px;top:199px;width:1px;height:2px;background:#401040;"></div>
<div class="code" style="left:300px;top:207px">    <b>end</b><span class="s">;</span></div>
<div class="b " style="left:259px;top:215px;width:1px;height:2px;background:#401040;"></div>
<div class="code" style="left:300px;top:223px">  <b>finally</b></div>
<span class="t" style="left:220.500px;top:221.0px;width:40px;text-align:right;font-size:11px;color:#222;letter-spacing:-0.200px;transform:none">100</span>
<div class="code" style="left:300px;top:239px">    Free<span class="s">;</span></div>
<div class="b " style="left:259px;top:247px;width:1px;height:2px;background:#401040;"></div>
<div class="code" style="left:300px;top:255px">  <b>end</b><span class="s">;</span></div>
<div class="b " style="left:259px;top:263px;width:1px;height:2px;background:#401040;"></div>
<div class="code" style="left:300px;top:271px"></div>
<div class="b " style="left:259px;top:279px;width:1px;height:2px;background:#401040;"></div>
<div class="code" style="left:300px;top:287px">  <b>with</b> TIniFile.Create<span class="p">(</span>SRIniS<span class="p">)</span> <b>do</b></div>
<div class="b " style="left:259px;top:295px;width:1px;height:2px;background:#401040;"></div>
<div class="code" style="left:300px;top:303px">  <b class="h">try</b></div>
<div class="b " style="left:257px;top:310px;width:4px;height:1px;background:#303030;"></div>
<div class="code" style="left:300px;top:319px">    <b>with</b> ed1 <b>do</b></div>
<div class="b " style="left:259px;top:327px;width:1px;height:2px;background:#401040;"></div>
<div class="code" style="left:300px;top:335px">    <b class="h">begin</b></div>
<div class="b " style="left:259px;top:343px;width:1px;height:2px;background:#401040;"></div>
<div class="code" style="left:300px;top:351px">      <b>for</b> i<span class="s">:=</span> <span class="n">0</span> <b>to</b> cc-<span class="n">1</span> <b>do</b></div>
<div class="b " style="left:259px;top:359px;width:1px;height:2px;background:#401040;"></div>
<div class="code" style="left:300px;top:367px">      <b>begin</b></div>
<div class="b " style="left:259px;top:375px;width:1px;height:2px;background:#401040;"></div>
<div class="code" style="left:300px;top:383px">        S<span class="s">:=</span> UTF8Decode<span class="p">(</span>ReadString<span class="p">(</span><span class="q">&#x27;SearchText&#x27;</span>, IntToStr<span class="p">(</span>i<span class="p">)</span>, <span class="q">&#x27;&#x27;</span><span class="p">)</span><span class="p">)</span><span class="s">;</span></div>
<span class="t" style="left:220.500px;top:381.0px;width:40px;text-align:right;font-size:11px;color:#222;letter-spacing:-0.200px;transform:none">110</span>
<div class="code" style="left:300px;top:399px">        <b>if</b> S <span class="s">&lt;&gt;</span> <span class="q">&#x27;&#x27;</span> <b>then</b> Items.Add<span class="p">(</span>S<span class="p">)</span><span class="s">;</span></div>
<div class="b " style="left:259px;top:407px;width:1px;height:2px;background:#401040;"></div>
<div class="code" style="left:300px;top:415px">      <b>end</b><span class="s">;</span></div>
<span class="t" style="left:220.500px;top:413.0px;width:40px;text-align:right;font-size:11px;color:#222;letter-spacing:-0.200px;transform:none">112</span>
<div class="code" style="left:300px;top:431px">      <b>if</b> Items.Count <span class="s">&gt;</span> <span class="n">0</span> <b>then</b></div>
<div class="b " style="left:259px;top:439px;width:1px;height:2px;background:#401040;"></div>
<div class="code" style="left:300px;top:447px">      Text<span class="s">:=</span> Items<span class="p">[</span><span class="n">0</span><span class="p">]</span><span class="s">;</span></div>
<div class="b " style="left:259px;top:455px;width:1px;height:2px;background:#401040;"></div>
<div class="code" style="left:300px;top:463px">      <b>if</b> S <span class="s">&lt;&gt;</span> <span class="q">&#x27;&#x27;</span> <b>then</b></div>
<div class="b " style="left:257px;top:470px;width:4px;height:1px;background:#303030;"></div>
<div class="code" style="left:300px;top:479px">        Text<span class="s">:=</span> S<span class="s">;</span></div>
<div class="b " style="left:259px;top:487px;width:1px;height:2px;background:#401040;"></div>
<div class="code" style="left:300px;top:495px">    <b class="h">end</b><span class="s">;</span></div>
<div class="b " style="left:259px;top:503px;width:1px;height:2px;background:#401040;"></div>
<div class="code" style="left:300px;top:511px">  <b>finally</b></div>
<div class="b " style="left:259px;top:519px;width:1px;height:2px;background:#401040;"></div>
<div class="code" style="left:300px;top:527px">    Free<span class="s">;</span></div>
<div class="b " style="left:259px;top:535px;width:1px;height:2px;background:#401040;"></div>
<div class="code" style="left:300px;top:543px">  <b class="h">end</b><span class="s">;</span></div>
<span class="t" style="left:220.500px;top:541.0px;width:40px;text-align:right;font-size:11px;color:#222;letter-spacing:-0.200px;transform:none">120</span>
<div class="code" style="left:300px;top:559px">  ed1Change<span class="p">(</span>Self<span class="p">)</span><span class="s">;</span></div>
<div class="b " style="left:259px;top:567px;width:1px;height:2px;background:#401040;"></div>
<div class="code" style="left:300px;top:575px"><b>end</b><span class="s">;</span></div>
<div class="b " style="left:259px;top:583px;width:1px;height:2px;background:#401040;"></div>
<div class="code" style="left:300px;top:591px"></div>
<div class="b " style="left:259px;top:599px;width:1px;height:2px;background:#401040;"></div>
<div class="code" style="left:300px;top:607px"><b>procedure</b> TfmSR.SSave<span class="p">(</span><b>const</b> Text: WideString<span class="s">;</span> List: TTntStrings<span class="p">)</span><span class="s">;</span></div>
<div class="b " style="left:259px;top:615px;width:1px;height:2px;background:#401040;"></div>
<div class="code" style="left:300px;top:623px"><b>var</b> idx: integer<span class="s">;</span></div>
<div class="b " style="left:257px;top:630px;width:4px;height:1px;background:#303030;"></div>
<div class="code" style="left:300px;top:639px"><b>begin</b></div>
<div class="b " style="left:259px;top:647px;width:1px;height:2px;background:#401040;"></div>
<div class="code" style="left:300px;top:655px">  <b>if</b> List <span class="s">=</span> <b>nil</b> <b>then</b> Exit<span class="s">;</span></div>
<div class="b " style="left:259px;top:663px;width:1px;height:2px;background:#401040;"></div>
<div class="code" style="left:300px;top:671px">  <b>if</b> Text <span class="s">=</span> <span class="q">&#x27;&#x27;</span> <b>then</b> Exit<span class="s">;</span></div>
<div class="b " style="left:259px;top:679px;width:1px;height:2px;background:#401040;"></div>
<div class="code" style="left:300px;top:687px">  idx <span class="s">:=</span> List.IndexOf<span class="p">(</span>Text<span class="p">)</span><span class="s">;</span></div>
<div class="b " style="left:259px;top:695px;width:1px;height:2px;background:#401040;"></div>
<div class="code" style="left:300px;top:703px">  <b>if</b> idx <span class="s">&lt;&gt;</span> -<span class="n">1</span> <b>then</b> List.Delete<span class="p">(</span>idx<span class="p">)</span><span class="s">;</span></div>
<span class="t" style="left:220.500px;top:701.0px;width:40px;text-align:right;font-size:11px;color:#222;letter-spacing:-0.200px;transform:none">130</span>
<div class="b " style="left:371px;top:415px;width:2px;height:14px;background:#000;"></div>
<div class="b " style="left:288px;top:177px;width:10px;height:10px;background:#fff;border:1px solid #000;"></div>
<div class="b " style="left:290px;top:181px;width:6px;height:1.5px;background:#000;"></div>
<div class="b " style="left:288px;top:305px;width:10px;height:10px;background:#fff;border:1px solid #000;"></div>
<div class="b " style="left:290px;top:309px;width:6px;height:1.5px;background:#000;"></div>
<div class="b " style="left:288px;top:337px;width:10px;height:10px;background:#fff;border:1px solid #000;"></div>
<div class="b " style="left:290px;top:341px;width:6px;height:1.5px;background:#000;"></div>
<div class="b " style="left:288px;top:369px;width:10px;height:10px;background:#fff;border:1px solid #000;"></div>
<div class="b " style="left:290px;top:373px;width:6px;height:1.5px;background:#000;"></div>
<div class="b " style="left:288px;top:609px;width:10px;height:10px;background:#fff;border:1px solid #000;"></div>
<div class="b " style="left:290px;top:613px;width:6px;height:1.5px;background:#000;"></div>
<div class="b " style="left:288px;top:641px;width:10px;height:10px;background:#fff;border:1px solid #000;"></div>
<div class="b " style="left:290px;top:645px;width:6px;height:1.5px;background:#000;"></div>
<div class="b " style="left:292px;top:173px;width:6px;height:1px;background:#808080;"></div>
<div class="b " style="left:292px;top:205px;width:6px;height:1px;background:#808080;"></div>
<div class="b " style="left:292px;top:221px;width:6px;height:1px;background:#808080;"></div>
<div class="b " style="left:292px;top:269px;width:6px;height:1px;background:#808080;"></div>
<div class="b " style="left:292px;top:429px;width:6px;height:1px;background:#808080;"></div>
<div class="b " style="left:292px;top:509px;width:6px;height:1px;background:#808080;"></div>
<div class="b " style="left:292px;top:557px;width:6px;height:1px;background:#808080;"></div>
<div class="b " style="left:292px;top:589px;width:6px;height:1px;background:#808080;"></div>
<div class="b " style="left:810px;top:112px;width:16px;height:621px;background:#F0F0F0;"></div>
<div class="b " style="left:237px;top:717px;width:573px;height:16px;background:#F0F0F0;"></div>
<div class="b " style="left:237px;top:717px;width:573px;height:1px;background:#fff;"></div>
<svg style="left:814px;top:118px" width="8" height="6" viewBox="0 0 8 6"><path d="M0.700 5.300l3.300-3.600 3.300 3.600" fill="none" stroke="#606060" stroke-width="1.800"/></svg>
<svg style="left:814px;top:706px" width="8" height="6" viewBox="0 0 8 6"><path d="M0.700 0.700l3.300 3.600 3.300-3.600" fill="none" stroke="#606060" stroke-width="1.800"/></svg>
<svg style="left:242px;top:721.5px" width="6" height="8" viewBox="0 0 6 8"><path d="M5.300 0.700l-3.600 3.300 3.600 3.300" fill="none" stroke="#B4B4B4" stroke-width="1.600"/></svg>
<svg style="left:798px;top:722px" width="6" height="8" viewBox="0 0 6 8"><path d="M0.700 0.700l3.600 3.300-3.600 3.300" fill="none" stroke="#B4B4B4" stroke-width="1.600"/></svg>
<div class="b " style="left:810px;top:387px;width:15px;height:101px;background:#C8C8C8;"></div>
<div class="b " style="left:826px;top:392px;width:10px;height:112px;background:#A6C8F0;"></div>
<div class="b " style="left:838px;top:395px;width:1px;height:2px;background:#A0A0A0;"></div>
<div class="b " style="left:838px;top:399px;width:1px;height:2px;background:#A0A0A0;"></div>
<div class="b " style="left:838px;top:403px;width:1px;height:2px;background:#A0A0A0;"></div>
<div class="b " style="left:838px;top:407px;width:1px;height:2px;background:#A0A0A0;"></div>
<div class="b " style="left:838px;top:411px;width:1px;height:2px;background:#A0A0A0;"></div>
<div class="b " style="left:838px;top:415px;width:1px;height:2px;background:#A0A0A0;"></div>
<div class="b " style="left:838px;top:419px;width:1px;height:2px;background:#A0A0A0;"></div>
<div class="b " style="left:184px;top:88px;width:1px;height:646px;background:#fff;"></div>
<div class="b " style="left:10px;top:732px;width:175px;height:1px;background:#fff;"></div>
<div class="b " style="left:841px;top:86px;width:175px;height:648px;background:#fff;"></div>
<div class="b " style="left:843px;top:88px;width:171px;height:18px;background:#F0F0F0;"></div>
<span class="t " style="left:849.5px;top:89.84px;font-size:12px;color:#000;letter-spacing:0.057px;">Clipboard History</span>
<svg style="left:1000px;top:93.5px" width="9" height="9" viewBox="0 0 9 9"><path d="M1.200 1.200l6.600 6.600M7.800 1.200l-6.600 6.600" stroke="#000" stroke-width="2"/></svg>
<div class="b" style="left:841px;top:106px;width:173px;height:120px;overflow:hidden">
<span class="t" style="left:4px;top:0.54px;letter-spacing:-0.162px">bRAll.ModalResult := srRAll;</span>
<span class="t" style="left:4px;top:16.54px;letter-spacing:0.218px">ShellExecute(0, &#x27;open&#x27;,</span>
<span class="t" style="left:4px;top:32.54px;letter-spacing:0.041px">Label4.Enabled:= ed2.Enabled;</span>
<span class="t" style="left:4px;top:48.54px;letter-spacing:0.147px">while List.Count &gt; SRCount do</span>
<span class="t" style="left:4px;top:64.54px;letter-spacing:-0.123px">SRRo: boolean;</span>
<span class="t" style="left:4px;top:80.54px;letter-spacing:0.239px">bGlob: TTntRadioButton;</span>
<span class="t" style="left:4px;top:96.54px;letter-spacing:0.134px">procedure FormDestroy(Sender: TObject);</span>
</div>
<div class="b " style="left:843px;top:711px;width:171px;height:21px;background:#F0F0F0;"></div>
<div class="b " style="left:845px;top:711px;width:66px;height:19px;background:#F0F0F0;border:1px solid #A0A0A0;border-top:none;"></div>
<span class="t " style="left:852px;top:712.34px;font-size:12px;color:#000;letter-spacing:0.016px;">Clipboard</span>
<span class="t " style="left:917px;top:710.34px;font-size:12px;color:#000;letter-spacing:0.594px;">Minimap</span>
<span class="t " style="left:980px;top:710.34px;font-size:12px;color:#000;letter-spacing:-0.034px;">Clips</span>
<div class="b " style="left:971px;top:712px;width:1px;height:15px;background:#A0A0A0;"></div>
<div class="b " style="left:8px;top:735px;width:159px;height:25px;background:#F0F0F0;border:1px solid #fff;"></div>
<div class="b " style="left:169px;top:735px;width:90px;height:25px;background:#F0F0F0;border:1px solid #fff;"></div>
<div class="b " style="left:261px;top:735px;width:35px;height:25px;background:#F0F0F0;border:1px solid #fff;"></div>
<div class="b " style="left:298px;top:735px;width:133px;height:25px;background:#F0F0F0;border:1px solid #fff;"></div>
<div class="b " style="left:433px;top:735px;width:104px;height:25px;background:#F0F0F0;border:1px solid #fff;"></div>
<div class="b " style="left:539px;top:735px;width:27px;height:25px;background:#F0F0F0;border:1px solid #fff;"></div>
<div class="b " style="left:568px;top:735px;width:27px;height:25px;background:#F0F0F0;border:1px solid #fff;"></div>
<div class="b " style="left:597px;top:735px;width:28px;height:25px;background:#F0F0F0;border:1px solid #fff;"></div>
<div class="b " style="left:627px;top:735px;width:29px;height:25px;background:#F0F0F0;border:1px solid #fff;"></div>
<div class="b " style="left:658px;top:735px;width:41px;height:25px;background:#F0F0F0;border:1px solid #fff;"></div>
<div class="b " style="left:701px;top:735px;width:20px;height:25px;background:#F0F0F0;border:1px solid #fff;"></div>
<div class="b " style="left:724px;top:735px;width:27px;height:25px;background:#F0F0F0;border:1px solid #fff;"></div>
<div class="b " style="left:754px;top:735px;width:262px;height:25px;background:#F0F0F0;border:1px solid #fff;"></div>
<span class="t " style="left:53px;top:738.84px;font-size:12px;color:#000;letter-spacing:-0.388px;">112 : 11 (206)</span>
<span class="t " style="left:200px;top:738.84px;font-size:12px;color:#000;letter-spacing:-0.377px;">ANSI</span>
<span class="t " style="left:267px;top:738.84px;font-size:12px;color:#000;letter-spacing:0.611px;">Win</span>
<span class="t " style="left:347px;top:738.84px;font-size:12px;color:#000;letter-spacing:-0.419px;">Pascal</span>
<span class="t " style="left:461px;top:738.84px;font-size:12px;color:#000;letter-spacing:-0.483px;">#13 0x0D</span>
<span class="t " style="left:633px;top:738.84px;font-size:12px;color:#000;letter-spacing:-0.169px;">Ins</span>
<span class="t " style="left:664px;top:738.84px;font-size:12px;color:#000;letter-spacing:-0.548px;">100%</span>
<span class="t " style="left:707px;top:738.84px;font-size:12px;color:#000;">8</span>
<svg style="left:546px;top:740px" width="15" height="15" viewBox="0 0 15 15"><path d="M4.500 6v-2.500q0-2.500 2.700-2.500t2.700 2.500v2.500" fill="none" stroke="#b8b8b8" stroke-width="1.500"/><rect x="1.500" y="5.500" width="11.500" height="8" rx="1" fill="#d8d8d8" stroke="#b0b0b0"/><path d="M2.500 8h9.500M2.500 10h9.500M2.500 12h9.500" stroke="#f0f0f0" stroke-width="0.800"/></svg>
<div class="b " style="left:575px;top:742px;width:11px;height:1px;background:#000090;"></div>
<div class="b " style="left:575px;top:745px;width:9px;height:1px;background:#000090;"></div>
<div class="b " style="left:575px;top:748px;width:11px;height:1px;background:#000090;"></div>
<div class="b " style="left:575px;top:751px;width:9px;height:1px;background:#000090;"></div>
<div class="b " style="left:608px;top:744px;width:9px;height:1px;background:#000090;"></div>
<div class="b " style="left:605px;top:746px;width:12px;height:1px;background:#000090;"></div>
<div class="b " style="left:605px;top:748px;width:12px;height:1px;background:#000090;"></div>
<div class="b " style="left:605px;top:750px;width:8px;height:1px;background:#000090;"></div>
<svg style="left:730px;top:742px" width="12" height="12" viewBox="0 0 12 12"><defs><radialGradient id="gball" cx="0.4" cy="0.35" r="0.7"><stop offset="0" stop-color="#c8c8c8"/><stop offset="1" stop-color="#8c8c8c"/></radialGradient></defs><circle cx="6" cy="6" r="5.500" fill="url(#gball)"/></svg>
<div class="b " style="left:1004px;top:756px;width:2px;height:2px;background:#B0B0B0;"></div>
<div class="b " style="left:1008px;top:756px;width:2px;height:2px;background:#B0B0B0;"></div>
<div class="b " style="left:1012px;top:756px;width:2px;height:2px;background:#B0B0B0;"></div>
<div class="b " style="left:1008px;top:752px;width:2px;height:2px;background:#B0B0B0;"></div>
<div class="b " style="left:1012px;top:752px;width:2px;height:2px;background:#B0B0B0;"></div>
<div class="b " style="left:1012px;top:748px;width:2px;height:2px;background:#B0B0B0;"></div>
<div class="b " style="left:372px;top:432px;width:400px;height:175px;background:rgba(0,0,0,0.600);"></div>
<div class="b " style="left:370px;top:430px;width:400px;height:175px;background:#F0F0F0;border:1px solid #fff;outline:1px solid #C8C8C8;outline-offset:-2px;"></div>
<div class="b " style="left:378px;top:438px;width:385px;height:160px;background:#fff;"></div>
<div class="b " style="left:746px;top:438px;width:17px;height:160px;background:#F4F4F4;"></div>
<svg style="left:750px;top:444px" width="8" height="6" viewBox="0 0 8 6"><path d="M0.700 5.300l3.300-3.600 3.300 3.600" fill="none" stroke="#606060" stroke-width="1.800"/></svg>
<svg style="left:750px;top:587px" width="8" height="6" viewBox="0 0 8 6"><path d="M0.700 0.700l3.300 3.600 3.300-3.600" fill="none" stroke="#606060" stroke-width="1.800"/></svg>
<div class="b " style="left:746px;top:486px;width:15px;height:17px;background:#C8C8C8;"></div>
<div class="b" style="left:378px;top:438px;width:367px;height:160px;overflow:hidden">
<span class="t" style="left:1.00px;top:0.64px;color:#800080;letter-spacing:0.309px;">function</span>
<span class="t" style="left:50.00px;top:0.64px;color:#000;letter-spacing:0.427px;font-weight:bold;">CreateAction</span>
<span class="t" style="left:133.30px;top:0.64px;color:#000;letter-spacing:0.190px;">(AOwner: TComponent, ActionClass: TBasicActionClass)</span>
<div class="b" style="left:1px;top:17px;width:366px;height:15px;background:#3399FF;outline:1px dotted #2a2010;outline-offset:-1px"></div>
<span class="t" style="left:1.00px;top:16.64px;color:#fff;letter-spacing:0.309px;">function</span>
<span class="t" style="left:50.00px;top:16.64px;color:#fff;letter-spacing:0.392px;font-weight:bold;">CreateDir</span>
<span class="t" style="left:110.30px;top:16.64px;color:#fff;letter-spacing:0.202px;">(const Dir: string): Boolean</span>
<span class="t" style="left:1.00px;top:32.64px;color:#800080;letter-spacing:0.309px;">function</span>
<span class="t" style="left:50.00px;top:32.64px;color:#000;letter-spacing:0.334px;font-weight:bold;">CreateGrayMappedBmp</span>
<span class="t" style="left:197.05px;top:32.64px;color:#000;letter-spacing:-0.061px;">(Handle: HBITMAP): HBITMAP</span>
<span class="t" style="left:1.00px;top:48.64px;color:#800080;letter-spacing:0.309px;">function</span>
<span class="t" style="left:50.00px;top:48.64px;color:#000;letter-spacing:0.316px;font-weight:bold;">CreateGrayMappedRes</span>
<span class="t" style="left:191.80px;top:48.64px;color:#000;letter-spacing:0.062px;">(Instance: THandle, ResName: PChar</span>
<span class="t" style="left:1.00px;top:64.64px;color:#800080;letter-spacing:0.309px;">function</span>
<span class="t" style="left:50.00px;top:64.64px;color:#000;letter-spacing:0.270px;font-weight:bold;">CreateGUID</span>
<span class="t" style="left:123.30px;top:64.64px;color:#000;letter-spacing:0.170px;">(out Guid: TGUID): HResult</span>
<span class="t" style="left:1.00px;top:80.64px;color:#800080;letter-spacing:0.309px;">function</span>
<span class="t" style="left:50.00px;top:80.64px;color:#000;letter-spacing:0.447px;font-weight:bold;">CreateMappedBmp</span>
<span class="t" style="left:169.30px;top:80.64px;color:#000;letter-spacing:0.040px;">(Handle: HBITMAP, const OldColors, NewColors: array of TColor)</span>
<span class="t" style="left:1.00px;top:96.64px;color:#800080;letter-spacing:0.309px;">function</span>
<span class="t" style="left:50.00px;top:96.64px;color:#000;letter-spacing:0.440px;font-weight:bold;">CreateMappedRes</span>
<span class="t" style="left:164.80px;top:96.64px;color:#000;letter-spacing:0.040px;">(Instance: THandle, ResName: PChar, const OldColors</span>
<span class="t" style="left:1.00px;top:112.64px;color:#800080;letter-spacing:0.309px;">function</span>
<span class="t" style="left:50.00px;top:112.64px;color:#000;letter-spacing:0.268px;font-weight:bold;">CreateMessageDialog</span>
<span class="t" style="left:183.30px;top:112.64px;color:#000;letter-spacing:0.163px;">(const Msg: string, DlgType: TMsgDlgType</span>
<span class="t" style="left:1.00px;top:128.64px;color:#800080;letter-spacing:0.309px;">function</span>
<span class="t" style="left:50.00px;top:128.64px;color:#000;letter-spacing:-0.487px;font-weight:bold;">Csc</span>
<span class="t" style="left:74.05px;top:128.64px;color:#000;letter-spacing:0.352px;">(const X: Extended): Extended</span>
<span class="t" style="left:1.00px;top:144.64px;color:#800080;letter-spacing:0.309px;">function</span>
<span class="t" style="left:50.00px;top:144.64px;color:#000;letter-spacing:-0.345px;font-weight:bold;">CscH</span>
<span class="t" style="left:82.80px;top:144.64px;color:#000;letter-spacing:0.360px;">(const X: Extended): Extended</span>
</div>
<div class="b " style="left:770px;top:430px;width:153px;height:30px;background:#FFFFE1;border:1px solid #D4D4B8;box-shadow:2px 2px 2px rgba(0,0,0,0.550);"></div>
<span class="t " style="left:772px;top:431.34px;font-size:12px;color:#000;letter-spacing:0.164px;font-weight:bold;">CreateDir</span>
<span class="t " style="left:829.5px;top:431.34px;font-size:12px;color:#000;letter-spacing:-0.439px;">(const Dir: string)</span>
<span class="t " style="left:772px;top:444.34px;font-size:12px;color:#808080;letter-spacing:-0.423px;">Creates a new directory.</span>
</body></html>
